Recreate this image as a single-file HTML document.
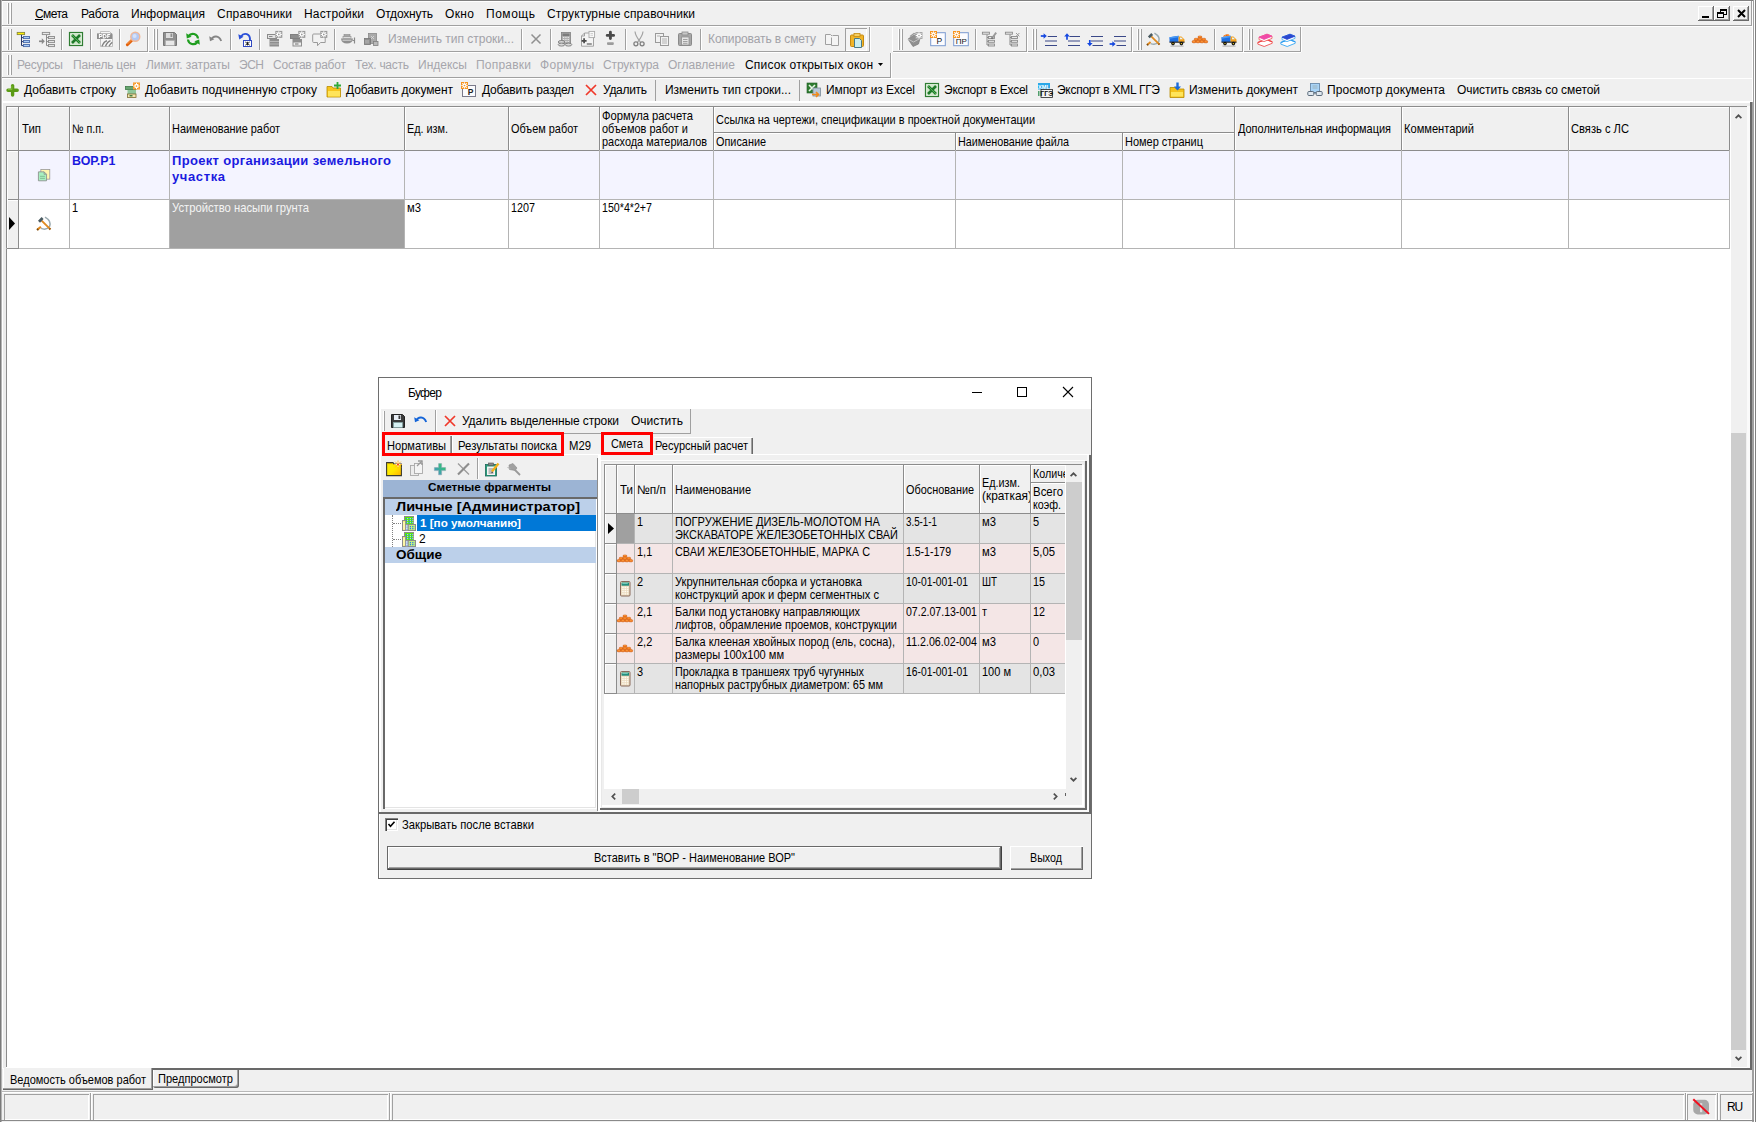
<!DOCTYPE html>
<html lang="ru"><head><meta charset="utf-8"><title>Смета</title>
<style>
html,body{margin:0;padding:0;}
body{width:1756px;height:1122px;position:relative;overflow:hidden;background:#f0f0f0;
font-family:"Liberation Sans",sans-serif;font-size:12.4px;color:#000;}
div,span.t,svg{position:absolute;}
span.t{white-space:pre;}
svg{overflow:visible;}
</style>
</head>
<body>
<div style="left:0px;top:0px;width:1756px;height:1px;background:#808080;"></div>
<div style="left:2px;top:1px;width:1750px;height:1px;background:#fff;"></div>
<div style="left:2px;top:1px;width:1px;height:100px;background:#fff;"></div>
<div style="left:0px;top:0px;width:1px;height:1122px;background:#7a7a7a;"></div>
<div style="left:1px;top:0px;width:1px;height:1122px;background:#b4b4b4;"></div>
<div style="left:1751px;top:1px;width:1px;height:25px;background:#a0a0a0;"></div>
<div style="left:1752px;top:1px;width:1px;height:101px;background:#fff;"></div>
<div style="left:1752px;top:102px;width:1px;height:1020px;background:#a0a0a0;"></div>
<div style="left:1753px;top:0px;width:1px;height:1122px;background:#a0a0a0;"></div>
<div style="left:1754px;top:0px;width:1px;height:1122px;background:#fff;"></div>
<div style="left:1755px;top:0px;width:1px;height:1122px;background:#808080;"></div>
<div style="left:2px;top:25px;width:1750px;height:1px;background:#a0a0a0;"></div>
<div style="left:2px;top:26px;width:1750px;height:1px;background:#fff;"></div>
<div style="left:7px;top:3px;width:1px;height:21px;background:#fff;"></div>
<div style="left:8px;top:3px;width:1px;height:21px;background:#a0a0a0;"></div>
<div style="left:10px;top:3px;width:1px;height:21px;background:#fff;"></div>
<div style="left:11px;top:3px;width:1px;height:21px;background:#a0a0a0;"></div>
<span class="t" style="left:35px;top:6px;line-height:16px;font-size:12px;letter-spacing:-0.559px;">Смета</span>
<span class="t" style="left:81px;top:6px;line-height:16px;font-size:12px;letter-spacing:-0.322px;">Работа</span>
<span class="t" style="left:131px;top:6px;line-height:16px;font-size:12px;letter-spacing:0.057px;">Информация</span>
<span class="t" style="left:217px;top:6px;line-height:16px;font-size:12px;letter-spacing:0.230px;">Справочники</span>
<span class="t" style="left:304px;top:6px;line-height:16px;font-size:12px;letter-spacing:0.145px;">Настройки</span>
<span class="t" style="left:376px;top:6px;line-height:16px;font-size:12px;letter-spacing:-0.170px;">Отдохнуть</span>
<span class="t" style="left:445px;top:6px;line-height:16px;font-size:12px;letter-spacing:0.370px;">Окно</span>
<span class="t" style="left:486px;top:6px;line-height:16px;font-size:12px;letter-spacing:0.528px;">Помощь</span>
<span class="t" style="left:547px;top:6px;line-height:16px;font-size:12px;letter-spacing:0.112px;">Структурные справочники</span>
<div style="left:35px;top:19px;width:8px;height:1px;background:#000;"></div>
<div style="left:1698px;top:6px;width:16px;height:15px;background:#f0f0f0;box-shadow:inset -1px -1px 0 #696969,inset 1px 1px 0 #fff,inset -2px -2px 0 #a0a0a0;"></div>
<div style="left:1714px;top:6px;width:16px;height:15px;background:#f0f0f0;box-shadow:inset -1px -1px 0 #696969,inset 1px 1px 0 #fff,inset -2px -2px 0 #a0a0a0;"></div>
<div style="left:1733px;top:6px;width:16px;height:15px;background:#f0f0f0;box-shadow:inset -1px -1px 0 #696969,inset 1px 1px 0 #fff,inset -2px -2px 0 #a0a0a0;"></div>
<div style="left:1702px;top:16px;width:7px;height:2px;background:#000;"></div>
<div style="left:1720px;top:9px;width:7px;height:6px;background:#f0f0f0;border:1px solid #000;border-top-width:2px;box-sizing:border-box;"></div>
<div style="left:1717px;top:12px;width:7px;height:6px;background:#f0f0f0;border:1px solid #000;border-top-width:2px;box-sizing:border-box;"></div>
<svg style="left:1737px;top:9px" width="9" height="9" viewBox="0 0 9 9"><path d="M1 1l7 7M8 1l-7 7" stroke="#000" stroke-width="2"/></svg>
<div style="left:2px;top:51px;width:868px;height:1px;background:#a0a0a0;"></div>
<div style="left:2px;top:52px;width:868px;height:1px;background:#fff;"></div>
<div style="left:893px;top:51px;width:408px;height:1px;background:#a0a0a0;"></div>
<div style="left:893px;top:52px;width:408px;height:1px;background:#fff;"></div>
<div style="left:7px;top:29px;width:1px;height:21px;background:#fff;"></div>
<div style="left:8px;top:29px;width:1px;height:21px;background:#a0a0a0;"></div>
<div style="left:10px;top:29px;width:1px;height:21px;background:#fff;"></div>
<div style="left:11px;top:29px;width:1px;height:21px;background:#a0a0a0;"></div>
<svg style="left:16px;top:31px" width="16" height="16" viewBox="0 0 16 16"><rect x="1.2" y="1.4" width="7.4" height="2.2" fill="#ffef00" stroke="#8a8a3a" stroke-width="0.9"/><path d="M5.5 4v10.6h2M5.5 6.6h2M5.5 10.6h2" fill="none" stroke="#2a3a6a" stroke-width="1" /><rect x="7.5" y="5.5" width="6" height="2.1" fill="#a8ccf8" stroke="#4a6aaa" stroke-width="0.9"/><rect x="7.5" y="9.5" width="6" height="2.1" fill="#a8ccf8" stroke="#4a6aaa" stroke-width="0.9"/><rect x="7.5" y="13.5" width="6" height="2.1" fill="#a8ccf8" stroke="#4a6aaa" stroke-width="0.9"/></svg>
<svg style="left:39px;top:31px" width="16" height="16" viewBox="0 0 16 16"><rect x="3.3" y="1.4" width="7.4" height="2.2" fill="#e8e8e8" stroke="#8a8a8a" stroke-width="0.9"/><path d="M7.5 4v10.6h2M7.5 6.6h2M7.5 10.6h2" fill="none" stroke="#8a8a8a" stroke-width="1" /><rect x="9.5" y="5.5" width="6" height="2.1" fill="#e4e4e4" stroke="#8a8a8a" stroke-width="0.9"/><rect x="9.5" y="9.5" width="6" height="2.1" fill="#e4e4e4" stroke="#8a8a8a" stroke-width="0.9"/><rect x="9.5" y="13.5" width="6" height="2.1" fill="#e4e4e4" stroke="#8a8a8a" stroke-width="0.9"/><path d="M0 10.3h4" fill="none" stroke="#8a8a8a" stroke-width="1.7" /><path d="M2.8 7.3l3 3-3 3z" fill="#8a8a8a" /></svg>
<div style="left:61px;top:29px;width:1px;height:21px;background:#a0a0a0;"></div>
<div style="left:62px;top:29px;width:1px;height:21px;background:#fff;"></div>
<svg style="left:68px;top:31px" width="16" height="16" viewBox="0 0 16 16"><rect x="1.5" y="1.5" width="13" height="13" fill="#e9f4e6" stroke="#2f7d32" stroke-width="1.2"/><rect x="3" y="3" width="10" height="10" fill="#cfe8c9"/><path d="M4 4l8 8M12 4l-8 8" fill="none" stroke="#1f7a2a" stroke-width="2.6" /><path d="M4 4l8 8" fill="none" stroke="#5fbf5f" stroke-width="0.8" /></svg>
<div style="left:90px;top:29px;width:1px;height:21px;background:#a0a0a0;"></div>
<div style="left:91px;top:29px;width:1px;height:21px;background:#fff;"></div>
<svg style="left:97px;top:31px" width="16" height="16" viewBox="0 0 16 16"><path d="M3.5 .5h9l3 3v12h-12z" fill="#f6f6f6" stroke="#b4b4b4" stroke-width="0.8" /><rect x="0" y="2.4" width="15.2" height="5.6" fill="#8e8e8e"/><path d="M2.4 7.1v-3.7h1.5a1.05 1.05 0 0 1 0 2.1h-1.5M6.3 7v-3.5h1.1a1.75 1.75 0 0 1 0 3.5zM10.7 7.1v-3.6h2.5M10.7 5.3h2" fill="none" stroke="#fff" stroke-width="1.05" /><path d="M5 15.3q2-5 5-5.6M8.5 15.3q2-4.6 5-5.6M12 15.3q1.5-3 3.3-4" fill="none" stroke="#808080" stroke-width="1.4" /></svg>
<div style="left:119px;top:29px;width:1px;height:21px;background:#a0a0a0;"></div>
<div style="left:120px;top:29px;width:1px;height:21px;background:#fff;"></div>
<svg style="left:125px;top:31px" width="16" height="16" viewBox="0 0 16 16"><path d="M2.3 13.8l4.6-4.6" fill="none" stroke="#e2600a" stroke-width="2.9" stroke-linecap="round"/><path d="M2.4 13l4-4" fill="none" stroke="#ffa050" stroke-width="0.9" /><circle cx="10.3" cy="5.8" r="4.5" fill="#b4c8f2" stroke="#f0b898" stroke-width="1.4"/><circle cx="9.6" cy="5" r="2" fill="#d4e2fb"/></svg>
<div style="left:147px;top:27px;width:1px;height:25px;background:#a0a0a0;"></div>
<div style="left:148px;top:27px;width:1px;height:25px;background:#fff;"></div>
<div style="left:153px;top:29px;width:1px;height:21px;background:#fff;"></div>
<div style="left:154px;top:29px;width:1px;height:21px;background:#a0a0a0;"></div>
<div style="left:156px;top:29px;width:1px;height:21px;background:#fff;"></div>
<div style="left:157px;top:29px;width:1px;height:21px;background:#a0a0a0;"></div>
<svg style="left:162px;top:31px" width="16" height="16" viewBox="0 0 16 16"><path d="M1.5 1.5h11l2 2v11h-13z" fill="#8f8f8f" stroke="#777" stroke-width="1" /><rect x="4" y="2" width="7" height="5" fill="#dcdcdc"/><rect x="8.5" y="2.5" width="1.8" height="3.5" fill="#8f8f8f"/><rect x="3.5" y="9.5" width="9" height="5" fill="#e8e8e8" stroke="#aaa" stroke-width="0.6"/></svg>
<svg style="left:185px;top:31px" width="16" height="16" viewBox="0 0 16 16"><path d="M13 7.5A5.2 5.2 0 0 0 3.6 5" fill="none" stroke="#1f9e1f" stroke-width="2.2" /><path d="M1.2 2.2l.6 5.2 4.8-1.6z" fill="#1f9e1f" /><path d="M3 8.5A5.2 5.2 0 0 0 12.4 11" fill="none" stroke="#1f9e1f" stroke-width="2.2" /><path d="M14.8 13.8l-.6-5.2-4.8 1.6z" fill="#1f9e1f" /></svg>
<svg style="left:208px;top:31px" width="16" height="16" viewBox="0 0 16 16"><path d="M3.5 8.5C5 4.5 11 4 13.2 10" fill="none" stroke="#858585" stroke-width="1.8" /><path d="M1.2 5.2l.8 5 4.4-2z" fill="#858585" /></svg>
<div style="left:230px;top:29px;width:1px;height:21px;background:#a0a0a0;"></div>
<div style="left:231px;top:29px;width:1px;height:21px;background:#fff;"></div>
<svg style="left:237px;top:31px" width="16" height="16" viewBox="0 0 16 16"><path d="M4 5.5C7 1 13.5 2.5 13 9.5" fill="none" stroke="#2a4fd8" stroke-width="1.9" /><path d="M1.3 3.2l1 5.2 4.2-2.6z" fill="#2a4fd8" /><rect x="6.5" y="9.5" width="8" height="6" fill="#fff" stroke="#3048c0" stroke-width="1"/><path d="M8.3 11l4.4 3.2M12.7 11l-4.4 3.2M10.5 10.8v3.6" fill="none" stroke="#111" stroke-width="0.9" /></svg>
<div style="left:259px;top:29px;width:1px;height:21px;background:#a0a0a0;"></div>
<div style="left:260px;top:29px;width:1px;height:21px;background:#fff;"></div>
<svg style="left:266px;top:31px" width="16" height="16" viewBox="0 0 16 16"><rect x="1.5" y="3.5" width="9" height="4" fill="#e4e4e4" stroke="#8a8a8a" stroke-width="1"/><path d="M3 5.5h3.5" fill="none" stroke="#8a8a8a" stroke-width="1" /><rect x="3.5" y="8" width="9.5" height="7.5" fill="#8e8e8e"/><path d="M3.5 10.5h9.5M3.5 13h9.5" fill="none" stroke="#c4c4c4" stroke-width="0.8" /><rect x="9.3" y="-0.10000000000000009" width="7" height="7" fill="#9a9a9a"/><circle cx="12.8" cy="3.4" r="1.5" fill="none" stroke="#fff" stroke-width="1.3"/><path d="M12.8 0.2999999999999998v1.3M12.8 5.2v1.3M9.700000000000001 3.4h1.3M14.600000000000001 3.4h1.3M10.5 1.1l.9 .9M14.200000000000001 4.8l.9 .9M15.100000000000001 1.1l-.9 .9M11.4 4.8l-.9 .9" fill="none" stroke="#fff" stroke-width="1" /></svg>
<svg style="left:289px;top:31px" width="16" height="16" viewBox="0 0 16 16"><rect x="1.5" y="3.5" width="9" height="4" fill="#8e8e8e" stroke="#808080" stroke-width="1"/><rect x="3.5" y="8" width="9.5" height="7.5" fill="#8e8e8e"/><rect x="4.5" y="11.5" width="7.5" height="3" fill="#ececec"/><path d="M6 13h3.5" fill="none" stroke="#707070" stroke-width="1" /><rect x="9.3" y="-0.10000000000000009" width="7" height="7" fill="#9a9a9a"/><circle cx="12.8" cy="3.4" r="1.5" fill="none" stroke="#fff" stroke-width="1.3"/><path d="M12.8 0.2999999999999998v1.3M12.8 5.2v1.3M9.700000000000001 3.4h1.3M14.600000000000001 3.4h1.3M10.5 1.1l.9 .9M14.200000000000001 4.8l.9 .9M15.100000000000001 1.1l-.9 .9M11.4 4.8l-.9 .9" fill="none" stroke="#fff" stroke-width="1" /></svg>
<svg style="left:311px;top:31px" width="16" height="16" viewBox="0 0 16 16"><path d="M2.7 3h11.5v8.5h-4.7l-3 3.2v-3.2h-3.8q-1 0-1-1v-6.5q0-1 1-1z" fill="#f2f2f2" stroke="#9a9a9a" stroke-width="1" /><rect x="9.3" y="-0.10000000000000009" width="7" height="7" fill="#9a9a9a"/><circle cx="12.8" cy="3.4" r="1.5" fill="none" stroke="#fff" stroke-width="1.3"/><path d="M12.8 0.2999999999999998v1.3M12.8 5.2v1.3M9.700000000000001 3.4h1.3M14.600000000000001 3.4h1.3M10.5 1.1l.9 .9M14.200000000000001 4.8l.9 .9M15.100000000000001 1.1l-.9 .9M11.4 4.8l-.9 .9" fill="none" stroke="#fff" stroke-width="1" /></svg>
<div style="left:334px;top:29px;width:1px;height:21px;background:#a0a0a0;"></div>
<div style="left:335px;top:29px;width:1px;height:21px;background:#fff;"></div>
<svg style="left:340px;top:31px" width="16" height="16" viewBox="0 0 16 16"><path d="M1 7.5h12q-.5 5-6 5t-6-5z" fill="#8f8f8f" /><rect x="4" y="3.5" width="6" height="2" fill="#a8a8a8" stroke="#8a8a8a" stroke-width="0.6"/><rect x="3" y="5.5" width="8" height="2" fill="#ddd" stroke="#8a8a8a" stroke-width="0.6"/><path d="M2.5 9.2h9" fill="none" stroke="#d8d8d8" stroke-width="1" /><path d="M14.5 6.5v6" fill="none" stroke="#8a8a8a" stroke-width="1.2" /><path d="M12.5 9.5h2" fill="none" stroke="#8a8a8a" stroke-width="1" /></svg>
<svg style="left:363px;top:31px" width="16" height="16" viewBox="0 0 16 16"><rect x="5.5" y="2.5" width="8" height="10" fill="#a9a9a9" stroke="#8a8a8a" stroke-width="0.8"/><rect x="1.5" y="7.5" width="6" height="6" fill="#8f8f8f" stroke="#777" stroke-width="0.8"/><rect x="10.5" y="10.5" width="4.5" height="4" fill="#b9b9b9" stroke="#808080" stroke-width="0.8"/><path d="M8 5l3 3M11 5l-3 3" fill="none" stroke="#ddd" stroke-width="0.8" /><path d="M3 9v3.5M5 9v3.5" fill="none" stroke="#c8c8c8" stroke-width="0.8" /></svg>
<span class="t" style="left:388px;top:31px;line-height:16px;font-size:12px;color:#a2a2a8;letter-spacing:-0.014px;">Изменить тип строки...</span>
<div style="left:521px;top:29px;width:1px;height:21px;background:#a0a0a0;"></div>
<div style="left:522px;top:29px;width:1px;height:21px;background:#fff;"></div>
<svg style="left:528px;top:31px" width="16" height="16" viewBox="0 0 16 16"><path d="M3.5 3.5l9 9M12.5 3.5l-9 9" fill="none" stroke="#909090" stroke-width="1.5" /></svg>
<div style="left:550px;top:29px;width:1px;height:21px;background:#a0a0a0;"></div>
<div style="left:551px;top:29px;width:1px;height:21px;background:#fff;"></div>
<svg style="left:557px;top:31px" width="16" height="16" viewBox="0 0 16 16"><rect x="4.5" y="1.5" width="9" height="11" fill="#b0b0b0" stroke="#808080" stroke-width="0.8"/><rect x="5.5" y="2.5" width="7" height="2.5" fill="#7c7c7c"/><path d="M6 6.5h6M6 8.5h6M6 10.5h6" fill="none" stroke="#e8e8e8" stroke-width="1" stroke-dasharray="1.3 1"/><ellipse cx="4.5" cy="11" rx="3.3" ry="1.5" fill="#d8d8d8" stroke="#707070" stroke-width=".8"/><ellipse cx="4.5" cy="13.6" rx="3.3" ry="1.5" fill="#d8d8d8" stroke="#707070" stroke-width=".8"/><ellipse cx="11.5" cy="13.6" rx="3.3" ry="1.5" fill="#d8d8d8" stroke="#707070" stroke-width=".8"/></svg>
<svg style="left:580px;top:31px" width="16" height="16" viewBox="0 0 16 16"><path d="M4.5 2h9v13.2h-12v-10.2z" fill="#f4f4f4" stroke="#9a9a9a" stroke-width="0.9" /><path d="M1.5 5h3v-3" fill="none" stroke="#9a9a9a" stroke-width="0.9" /><rect x="9" y="0.4" width="5.6" height="6.2" fill="#f8f8f8" stroke="#a8a8a8" stroke-width="0.9"/><path d="M1.6 9.8h5M4.1 7.3v5" fill="none" stroke="#4a4a4a" stroke-width="1.7" /><path d="M6.8 13h5" fill="none" stroke="#8a8a8a" stroke-width="1.7" /><path d="M10.5 2.5h2.5M10.5 4.3h2.5" fill="none" stroke="#c4c4c4" stroke-width="0.8" /></svg>
<svg style="left:602px;top:31px" width="16" height="16" viewBox="0 0 16 16"><path d="M5.2 4.4h6.4M8.4 1.2v6.4" fill="none" stroke="#4a4a4a" stroke-width="2.9" stroke-linecap="round"/><rect x="5" y="11.2" width="6.8" height="2.7" fill="#9c9c9c" rx="0.8"/></svg>
<div style="left:625px;top:29px;width:1px;height:21px;background:#a0a0a0;"></div>
<div style="left:626px;top:29px;width:1px;height:21px;background:#fff;"></div>
<svg style="left:631px;top:31px" width="16" height="16" viewBox="0 0 16 16"><path d="M4 .5C4.5 5 7 8 9.3 11M12 .5C11.5 5 9 8 6.7 11" fill="none" stroke="#a2a2a2" stroke-width="1.2" /><circle cx="4.9" cy="12.8" r="2" fill="none" stroke="#808080" stroke-width="1.3"/><circle cx="11.1" cy="12.8" r="2" fill="none" stroke="#808080" stroke-width="1.3"/></svg>
<svg style="left:654px;top:31px" width="16" height="16" viewBox="0 0 16 16"><rect x="1.5" y="2.5" width="8" height="9" fill="#f2f2f2" stroke="#9a9a9a" stroke-width="1"/><rect x="6.5" y="5.5" width="8" height="9" fill="#f2f2f2" stroke="#9a9a9a" stroke-width="1"/><path d="M8 8h5M8 10h5M8 12h5M3 5h3" fill="none" stroke="#aaa" stroke-width="0.9" /></svg>
<svg style="left:677px;top:31px" width="16" height="16" viewBox="0 0 16 16"><rect x="1.5" y="2.5" width="13" height="12" fill="#a8a8a8" stroke="#8a8a8a" stroke-width="1" rx="1"/><rect x="5" y="1" width="6" height="3" fill="#c8c8c8" stroke="#8a8a8a" stroke-width="0.8"/><rect x="4.5" y="6" width="7.5" height="8" fill="#e6e6e6" stroke="#909090" stroke-width="0.8"/><path d="M6 8.5h4.5M6 10.5h4.5M6 12.3h4.5" fill="none" stroke="#999" stroke-width="0.9" /></svg>
<div style="left:700px;top:29px;width:1px;height:21px;background:#a0a0a0;"></div>
<div style="left:701px;top:29px;width:1px;height:21px;background:#fff;"></div>
<span class="t" style="left:708px;top:31px;line-height:16px;font-size:12px;color:#a2a2a8;letter-spacing:-0.107px;">Копировать в смету</span>
<svg style="left:824px;top:31px" width="16" height="16" viewBox="0 0 16 16"><path d="M1.5 3.5h5l2 2v8h-7z" fill="#f4f4f4" stroke="#a0a0a0" stroke-width="1" /><path d="M8.5 4.5h6v10h-7v-8" fill="#f4f4f4" stroke="#a0a0a0" stroke-width="1" /></svg>
<div style="left:845px;top:28px;width:22px;height:23px;background:#f4f4f4;box-shadow:inset 1px 1px 0 #a0a0a0,inset -1px -1px 0 #fff;"></div>
<svg style="left:849px;top:32px" width="16" height="16" viewBox="0 0 16 16"><rect x="1.5" y="3" width="13" height="11.5" fill="#f0b428" stroke="#c58a10" stroke-width="1" rx="1"/><rect x="5" y="1.5" width="6" height="3" fill="#f6cf60" stroke="#c58a10" stroke-width="0.8"/><path d="M5.5 6.5h5l2 2v7h-7z" fill="#c9eef0" stroke="#4a7a88" stroke-width="1" /></svg>
<div style="left:869px;top:27px;width:1px;height:25px;background:#a0a0a0;"></div>
<div style="left:870px;top:27px;width:1px;height:25px;background:#fff;"></div>
<div style="left:892px;top:27px;width:1px;height:25px;background:#fff;"></div>
<div style="left:898px;top:29px;width:1px;height:21px;background:#fff;"></div>
<div style="left:899px;top:29px;width:1px;height:21px;background:#a0a0a0;"></div>
<div style="left:901px;top:29px;width:1px;height:21px;background:#fff;"></div>
<div style="left:902px;top:29px;width:1px;height:21px;background:#a0a0a0;"></div>
<svg style="left:907px;top:31px" width="16" height="16" viewBox="0 0 16 16"><path d="M1 8l6-4 6 3.5-1.5 5.5-5.5 2.5z" fill="#909090" stroke="#7a7a7a" stroke-width="0.7" /><path d="M1 8l5.5 3 6.5-3.5" fill="none" stroke="#c4c4c4" stroke-width="1" /><path d="M3 5.5l4-3 3 1.5" fill="none" stroke="#9a9a9a" stroke-width="1.2" /><rect x="8.5" y="1.0" width="7" height="7" fill="#a8a8a8"/><circle cx="12" cy="4.5" r="1.5" fill="none" stroke="#fff" stroke-width="1.3"/><path d="M12 1.4v1.3M12 6.3v1.3M8.9 4.5h1.3M13.8 4.5h1.3M9.7 2.2l.9 .9M13.4 5.9l.9 .9M14.3 2.2l-.9 .9M10.6 5.9l-.9 .9" fill="none" stroke="#fff" stroke-width="1" /></svg>
<svg style="left:930px;top:31px" width="16" height="16" viewBox="0 0 16 16"><rect x="0.7" y="1.7" width="14.6" height="13" fill="#fcfcff" stroke="#7a9ad0" stroke-width="1"/><text x="9.3" y="13.2" font-family="Liberation Sans" font-size="8.5" fill="#111" text-anchor="middle">Р</text><rect x="0.0" y="0.0" width="7" height="7" fill="#f7941d"/><circle cx="3.5" cy="3.5" r="1.5" fill="none" stroke="#fff" stroke-width="1.3"/><path d="M3.5 0.3999999999999999v1.3M3.5 5.3v1.3M0.3999999999999999 3.5h1.3M5.3 3.5h1.3M1.2000000000000002 1.2000000000000002l.9 .9M4.9 4.9l.9 .9M5.8 1.2000000000000002l-.9 .9M2.1 4.9l-.9 .9" fill="none" stroke="#fff" stroke-width="1" /></svg>
<svg style="left:953px;top:31px" width="16" height="16" viewBox="0 0 16 16"><rect x="0.7" y="1.7" width="14.6" height="13" fill="#fcfcff" stroke="#7a9ad0" stroke-width="1"/><text x="8.2" y="13.2" font-family="Liberation Sans" font-size="8" fill="#111" text-anchor="middle">ПР</text><rect x="0.0" y="0.0" width="7" height="7" fill="#f7941d"/><circle cx="3.5" cy="3.5" r="1.5" fill="none" stroke="#fff" stroke-width="1.3"/><path d="M3.5 0.3999999999999999v1.3M3.5 5.3v1.3M0.3999999999999999 3.5h1.3M5.3 3.5h1.3M1.2000000000000002 1.2000000000000002l.9 .9M4.9 4.9l.9 .9M5.8 1.2000000000000002l-.9 .9M2.1 4.9l-.9 .9" fill="none" stroke="#fff" stroke-width="1" /></svg>
<div style="left:975px;top:29px;width:1px;height:21px;background:#a0a0a0;"></div>
<div style="left:976px;top:29px;width:1px;height:21px;background:#fff;"></div>
<svg style="left:981px;top:31px" width="16" height="16" viewBox="0 0 16 16"><rect x="1.4" y="1.2" width="7" height="2" fill="#e8e8e8" stroke="#8a8a8a" stroke-width="0.9"/><path d="M6 3.5v10.5h1.5M6 6.5h1.5M6 10.3h1.5" fill="none" stroke="#8a8a8a" stroke-width="1" /><rect x="7.5" y="5.5" width="6" height="2" fill="#e8e8e8" stroke="#8a8a8a" stroke-width="0.9"/><rect x="7.5" y="9.3" width="6" height="2" fill="#e8e8e8" stroke="#8a8a8a" stroke-width="0.9"/><rect x="7.5" y="13" width="6" height="2" fill="#e8e8e8" stroke="#8a8a8a" stroke-width="0.9"/><path d="M11 7.2L15.2 1.6" fill="none" stroke="#9a9a9a" stroke-width="1.9" /><path d="M10.6 7.8l.8-1.2" fill="none" stroke="#6a6a6a" stroke-width="1.6" /></svg>
<svg style="left:1004px;top:31px" width="16" height="16" viewBox="0 0 16 16"><rect x="1.4" y="1.2" width="7" height="2" fill="#e8e8e8" stroke="#8a8a8a" stroke-width="0.9"/><path d="M6 3.5v10.5h1.5M6 6.5h1.5M6 10.3h1.5" fill="none" stroke="#8a8a8a" stroke-width="1" /><rect x="7.5" y="5.5" width="6" height="2" fill="#e8e8e8" stroke="#8a8a8a" stroke-width="0.9"/><rect x="7.5" y="9.3" width="6" height="2" fill="#e8e8e8" stroke="#8a8a8a" stroke-width="0.9"/><rect x="7.5" y="13" width="6" height="2" fill="#e8e8e8" stroke="#8a8a8a" stroke-width="0.9"/><path d="M12 2l3.4 3.4M15.4 2l-3.4 3.4" fill="none" stroke="#9a9a9a" stroke-width="1" /></svg>
<div style="left:1026px;top:27px;width:1px;height:25px;background:#a0a0a0;"></div>
<div style="left:1027px;top:27px;width:1px;height:25px;background:#fff;"></div>
<div style="left:1032px;top:29px;width:1px;height:21px;background:#fff;"></div>
<div style="left:1033px;top:29px;width:1px;height:21px;background:#a0a0a0;"></div>
<div style="left:1035px;top:29px;width:1px;height:21px;background:#fff;"></div>
<div style="left:1036px;top:29px;width:1px;height:21px;background:#a0a0a0;"></div>
<svg style="left:1040px;top:31px" width="16" height="16" viewBox="0 0 16 16"><path d="M7.8 5.5h9.2M5 10h12M5 14.5h12" fill="none" stroke="#3a4888" stroke-width="1.2" /><path d="M.8 5h4" fill="none" stroke="#1447e0" stroke-width="1.7" /><path d="M3.6 2.2l3.2 2.8-3.2 2.8z" fill="#1447e0" /></svg>
<svg style="left:1063px;top:31px" width="16" height="16" viewBox="0 0 16 16"><path d="M6.5 5.5h10.5M5 10h12M5 14.5h12" fill="none" stroke="#3a4888" stroke-width="1.2" /><path d="M4 4.5v4.2" fill="none" stroke="#1447e0" stroke-width="1.7" /><path d="M1.2 5.4l2.8-3.2 2.8 3.2z" fill="#1447e0" /></svg>
<svg style="left:1086px;top:31px" width="16" height="16" viewBox="0 0 16 16"><path d="M5 5.5h12M5 10h12M6.5 14.5h10.5" fill="none" stroke="#3a4888" stroke-width="1.2" /><path d="M3.8 9v4" fill="none" stroke="#1447e0" stroke-width="1.7" /><path d="M1 12l2.8 3.2 2.8-3.2z" fill="#1447e0" /></svg>
<svg style="left:1109px;top:31px" width="16" height="16" viewBox="0 0 16 16"><path d="M5 5.5h12M5 10h12M7.5 14.5h9.5" fill="none" stroke="#3a4888" stroke-width="1.2" /><path d="M.6 13h4" fill="none" stroke="#1447e0" stroke-width="1.7" /><path d="M3.4 10.2l3.2 2.8-3.2 2.8z" fill="#1447e0" /></svg>
<div style="left:1131px;top:27px;width:1px;height:25px;background:#a0a0a0;"></div>
<div style="left:1132px;top:27px;width:1px;height:25px;background:#fff;"></div>
<div style="left:1137px;top:29px;width:1px;height:21px;background:#fff;"></div>
<div style="left:1138px;top:29px;width:1px;height:21px;background:#a0a0a0;"></div>
<div style="left:1140px;top:29px;width:1px;height:21px;background:#fff;"></div>
<div style="left:1141px;top:29px;width:1px;height:21px;background:#a0a0a0;"></div>
<svg style="left:1146px;top:32px" width="15" height="15" viewBox="0 0 16 16"><path d="M9 1.2Q15.6 5 13.6 10.4Q10.5 14.6 5 12.4" fill="none" stroke="#9aaab0" stroke-width="1.5" /><path d="M1.4 13.6L4.9 10.7" fill="none" stroke="#e08a20" stroke-width="2.1" /><path d="M1 14l1.2-1" fill="none" stroke="#7a4a10" stroke-width="2" /><path d="M5.6 4.6L14.2 13.2" fill="none" stroke="#e08a20" stroke-width="1.9" /><path d="M13.3 12.3l1.2 1.2" fill="none" stroke="#9a5a10" stroke-width="1.9" /><path d="M3 5.7L6.6 2.1" fill="none" stroke="#4a5a60" stroke-width="2.8" /></svg>
<svg style="left:1169px;top:31px" width="16" height="16" viewBox="0 0 16 16"><path d="M.5 6.3L9.6 4.8V11H.5z" fill="#1e6ee0" /><path d="M.5 6.3L9.6 4.8v1.4L.5 7.7z" fill="#4a9af4" /><path d="M9.6 5.6h2.8l3.1 3v2.6h-5.9z" fill="#f2a01e" /><path d="M11 6.6h1.3l1.7 1.7h-3z" fill="#e4f2ff" /><rect x="0.5" y="10.6" width="15" height="1.2" fill="#2a2a2a"/><circle cx="4" cy="12.6" r="1.8" fill="#111"/><circle cx="4" cy="12.6" r="0.7" fill="#f4d020"/><circle cx="12.4" cy="12.6" r="1.8" fill="#111"/><circle cx="12.4" cy="12.6" r="0.7" fill="#f4d020"/><path d="M1.5 15.1h13" fill="none" stroke="#9a9a9a" stroke-width="0.8" /></svg>
<svg style="left:1192px;top:31px" width="16" height="16" viewBox="0 0 16 16"><rect x="6.1" y="5" width="3.7" height="2.2" fill="#f67a14" stroke="#c94e00" stroke-width="0.5" rx="0.9"/><path d="M6.8999999999999995 5.7h2" fill="none" stroke="#ffb060" stroke-width="0.6" /><rect x="2.3" y="7.3" width="3.7" height="2.2" fill="#f67a14" stroke="#c94e00" stroke-width="0.5" rx="0.9"/><path d="M3.0999999999999996 8.0h2" fill="none" stroke="#ffb060" stroke-width="0.6" /><rect x="6.1" y="7.3" width="3.7" height="2.2" fill="#f67a14" stroke="#c94e00" stroke-width="0.5" rx="0.9"/><path d="M6.8999999999999995 8.0h2" fill="none" stroke="#ffb060" stroke-width="0.6" /><rect x="9.9" y="7.3" width="3.7" height="2.2" fill="#f67a14" stroke="#c94e00" stroke-width="0.5" rx="0.9"/><path d="M10.700000000000001 8.0h2" fill="none" stroke="#ffb060" stroke-width="0.6" /><rect x="0.2" y="9.6" width="3.7" height="2.2" fill="#f67a14" stroke="#c94e00" stroke-width="0.5" rx="0.9"/><path d="M1.0 10.299999999999999h2" fill="none" stroke="#ffb060" stroke-width="0.6" /><rect x="4.1" y="9.6" width="3.7" height="2.2" fill="#f67a14" stroke="#c94e00" stroke-width="0.5" rx="0.9"/><path d="M4.8999999999999995 10.299999999999999h2" fill="none" stroke="#ffb060" stroke-width="0.6" /><rect x="8" y="9.6" width="3.7" height="2.2" fill="#f67a14" stroke="#c94e00" stroke-width="0.5" rx="0.9"/><path d="M8.8 10.299999999999999h2" fill="none" stroke="#ffb060" stroke-width="0.6" /><rect x="11.9" y="9.6" width="3.7" height="2.2" fill="#f67a14" stroke="#c94e00" stroke-width="0.5" rx="0.9"/><path d="M12.700000000000001 10.299999999999999h2" fill="none" stroke="#ffb060" stroke-width="0.6" /></svg>
<div style="left:1214px;top:29px;width:1px;height:21px;background:#a0a0a0;"></div>
<div style="left:1215px;top:29px;width:1px;height:21px;background:#fff;"></div>
<svg style="left:1221px;top:31px" width="16" height="16" viewBox="0 0 16 16"><path d="M2 5.8q.5-2.2 3-2.4q2.6-.4 4 1.2z" fill="#e8640a" /><path d="M3.4 4.6h1.6M6 4h1.6" fill="none" stroke="#ffa040" stroke-width="0.9" /><path d="M.5 6.3L9.6 4.8V11H.5z" fill="#1e6ee0" /><path d="M.5 6.3L9.6 4.8v1.4L.5 7.7z" fill="#4a9af4" /><path d="M9.6 5.6h2.8l3.1 3v2.6h-5.9z" fill="#f2a01e" /><path d="M11 6.6h1.3l1.7 1.7h-3z" fill="#e4f2ff" /><rect x="0.5" y="10.6" width="15" height="1.2" fill="#2a2a2a"/><circle cx="4" cy="12.6" r="1.8" fill="#111"/><circle cx="4" cy="12.6" r="0.7" fill="#f4d020"/><circle cx="12.4" cy="12.6" r="1.8" fill="#111"/><circle cx="12.4" cy="12.6" r="0.7" fill="#f4d020"/><path d="M1.5 15.1h13" fill="none" stroke="#9a9a9a" stroke-width="0.8" /></svg>
<div style="left:1242px;top:27px;width:1px;height:25px;background:#a0a0a0;"></div>
<div style="left:1243px;top:27px;width:1px;height:25px;background:#fff;"></div>
<div style="left:1248px;top:29px;width:1px;height:21px;background:#fff;"></div>
<div style="left:1249px;top:29px;width:1px;height:21px;background:#a0a0a0;"></div>
<div style="left:1251px;top:29px;width:1px;height:21px;background:#fff;"></div>
<div style="left:1252px;top:29px;width:1px;height:21px;background:#a0a0a0;"></div>
<svg style="left:1257px;top:31px" width="16" height="16" viewBox="0 0 16 16"><path d="M.8 11.5l8-3 6.4 2.2v1.6l-8 3.2-6.4-2.4z" fill="#fff" stroke="#f06060" stroke-width="1" /><path d="M.8 11.5l8-3 6.4 2.2" fill="none" stroke="#f04040" stroke-width="1.2" /><path d="M2 6.2l8-3 5 2v2.2l-8 3.2-5-2z" fill="#fff" stroke="#f06060" stroke-width="0.9" /><path d="M2 6.2l8-3 5 2-8 3.2z" fill="#f04aa8" stroke="#f04aa8" stroke-width="0.8" /></svg>
<svg style="left:1280px;top:31px" width="16" height="16" viewBox="0 0 16 16"><path d="M.8 11.5l8-3 6.4 2.2v1.6l-8 3.2-6.4-2.4z" fill="#fff" stroke="#4ab0f4" stroke-width="1" /><path d="M.8 11.5l8-3 6.4 2.2" fill="none" stroke="#2a9af0" stroke-width="1.2" /><path d="M2 6.2l8-3 5 2v2.2l-8 3.2-5-2z" fill="#fff" stroke="#4ab0f4" stroke-width="0.9" /><path d="M2 6.2l8-3 5 2-8 3.2z" fill="#2a48d0" stroke="#2a48d0" stroke-width="0.8" /></svg>
<div style="left:1300px;top:27px;width:1px;height:25px;background:#a0a0a0;"></div>
<div style="left:1301px;top:27px;width:1px;height:25px;background:#fff;"></div>
<div style="left:2px;top:77px;width:890px;height:1px;background:#a0a0a0;"></div>
<div style="left:2px;top:78px;width:1751px;height:1px;background:#fff;"></div>
<div style="left:7px;top:55px;width:1px;height:20px;background:#fff;"></div>
<div style="left:8px;top:55px;width:1px;height:20px;background:#a0a0a0;"></div>
<div style="left:10px;top:55px;width:1px;height:20px;background:#fff;"></div>
<div style="left:11px;top:55px;width:1px;height:20px;background:#a0a0a0;"></div>
<span class="t" style="left:17px;top:57px;line-height:16px;font-size:12px;color:#a6a6ac;letter-spacing:-0.221px;">Ресурсы</span>
<span class="t" style="left:73px;top:57px;line-height:16px;font-size:12px;color:#a6a6ac;letter-spacing:-0.203px;">Панель цен</span>
<span class="t" style="left:146px;top:57px;line-height:16px;font-size:12px;color:#a6a6ac;letter-spacing:-0.076px;">Лимит. затраты</span>
<span class="t" style="left:239px;top:57px;line-height:16px;font-size:12px;color:#a6a6ac;letter-spacing:-0.484px;">ЭСН</span>
<span class="t" style="left:273px;top:57px;line-height:16px;font-size:12px;color:#a6a6ac;letter-spacing:-0.202px;">Состав работ</span>
<span class="t" style="left:355px;top:57px;line-height:16px;font-size:12px;color:#a6a6ac;letter-spacing:-0.269px;">Тех. часть</span>
<span class="t" style="left:418px;top:57px;line-height:16px;font-size:12px;color:#a6a6ac;letter-spacing:0.010px;">Индексы</span>
<span class="t" style="left:476px;top:57px;line-height:16px;font-size:12px;color:#a6a6ac;letter-spacing:0.217px;">Поправки</span>
<span class="t" style="left:540px;top:57px;line-height:16px;font-size:12px;color:#a6a6ac;letter-spacing:0.297px;">Формулы</span>
<span class="t" style="left:603px;top:57px;line-height:16px;font-size:12px;color:#a6a6ac;letter-spacing:-0.117px;">Структура</span>
<span class="t" style="left:668px;top:57px;line-height:16px;font-size:12px;color:#a6a6ac;letter-spacing:0.010px;">Оглавление</span>
<span class="t" style="left:745px;top:57px;line-height:16px;font-size:12px;letter-spacing:0.183px;">Список открытых окон</span>
<svg style="left:878px;top:63px" width="5" height="3" viewBox="0 0 5 3"><path d="M0 0h5l-2.5 3z" fill="#000"/></svg>
<div style="left:890px;top:53px;width:1px;height:25px;background:#a0a0a0;"></div>
<div style="left:891px;top:53px;width:1px;height:25px;background:#fff;"></div>
<svg style="left:5px;top:82px" width="16" height="16" viewBox="0 0 16 16"><path d="M3 8.3h9.2M7.6 3.6v9.4" fill="none" stroke="#5a9a14" stroke-width="3.4" stroke-linecap="round"/><path d="M3 7.6h3.9v-3.9" fill="none" stroke="#86c43c" stroke-width="0.9" /></svg>
<span class="t" style="left:24px;top:82px;line-height:16px;font-size:12px;letter-spacing:-0.044px;">Добавить строку</span>
<svg style="left:125px;top:82px" width="16" height="16" viewBox="0 0 16 16"><rect x="0.5" y="4.5" width="10.5" height="3" fill="#66a56f" stroke="#3f7a49" stroke-width="0.8"/><rect x="2.5" y="8" width="8.5" height="4" fill="#8fc79a"/><rect x="2.5" y="12" width="8.5" height="3.5" fill="#f3e7b0" stroke="#7a6a30" stroke-width="0.8"/><path d="M4.5 13.8h3" fill="none" stroke="#1d6a2a" stroke-width="1.2" /><rect x="8.0" y="0.5" width="7" height="7" fill="#f7941d"/><circle cx="11.5" cy="4" r="1.5" fill="none" stroke="#fff" stroke-width="1.3"/><path d="M11.5 0.8999999999999999v1.3M11.5 5.8v1.3M8.4 4h1.3M13.3 4h1.3M9.2 1.7000000000000002l.9 .9M12.9 5.4l.9 .9M13.8 1.7000000000000002l-.9 .9M10.1 5.4l-.9 .9" fill="none" stroke="#fff" stroke-width="1" /></svg>
<span class="t" style="left:145px;top:82px;line-height:16px;font-size:12px;letter-spacing:0.063px;">Добавить подчиненную строку</span>
<svg style="left:326px;top:82px" width="16" height="16" viewBox="0 0 16 16"><path d="M1 4.5h5l1 1.5h7.5v9h-13.5z" fill="#f7c51d" stroke="#b88a00" stroke-width="0.8" /><path d="M2 9h12v5.5h-12z" fill="#ffe45a" /><path d="M11.5 0v7M8 3.5h7" fill="none" stroke="#2faa3a" stroke-width="1.8" /></svg>
<span class="t" style="left:346px;top:82px;line-height:16px;font-size:12px;letter-spacing:-0.084px;">Добавить документ</span>
<svg style="left:461px;top:82px" width="16" height="16" viewBox="0 0 16 16"><rect x="1.5" y="3.5" width="13" height="11" fill="#fbfbfd" stroke="#7a7a8a" stroke-width="1"/><text x="9.5" y="13.3" font-family="Liberation Sans" font-size="8.5" font-weight="700" fill="#222" text-anchor="middle">Р</text><rect x="0.0" y="0.0" width="7" height="7" fill="#f7941d"/><circle cx="3.5" cy="3.5" r="1.5" fill="none" stroke="#fff" stroke-width="1.3"/><path d="M3.5 0.3999999999999999v1.3M3.5 5.3v1.3M0.3999999999999999 3.5h1.3M5.3 3.5h1.3M1.2000000000000002 1.2000000000000002l.9 .9M4.9 4.9l.9 .9M5.8 1.2000000000000002l-.9 .9M2.1 4.9l-.9 .9" fill="none" stroke="#fff" stroke-width="1" /></svg>
<span class="t" style="left:482px;top:82px;line-height:16px;font-size:12px;letter-spacing:-0.222px;">Добавить раздел</span>
<svg style="left:583px;top:82px" width="16" height="16" viewBox="0 0 16 16"><path d="M3 3l10 10M13 3l-10 10" fill="none" stroke="#f0382a" stroke-width="1.7" /></svg>
<span class="t" style="left:603px;top:82px;line-height:16px;font-size:12px;letter-spacing:-0.305px;">Удалить</span>
<div style="left:655px;top:80px;width:1px;height:21px;background:#a0a0a0;"></div>
<span class="t" style="left:665px;top:82px;line-height:16px;font-size:12px;letter-spacing:-0.014px;">Изменить тип строки...</span>
<div style="left:799px;top:80px;width:1px;height:21px;background:#a0a0a0;"></div>
<svg style="left:806px;top:82px" width="16" height="16" viewBox="0 0 16 16"><rect x="1" y="1" width="10" height="10" fill="#2f7d32" stroke="#1f5d22" stroke-width="0.6"/><path d="M3 3l6 6M9 3l-6 6" fill="none" stroke="#eaf6e8" stroke-width="1.6" /><rect x="7" y="6" width="7.5" height="8" fill="#b8c8d8" stroke="#7a8a9a" stroke-width="0.8"/><path d="M6 12.5h6M10 10l2.5 2.5-2.5 2.5" fill="none" stroke="#f28a1a" stroke-width="1.6" /></svg>
<span class="t" style="left:826px;top:82px;line-height:16px;font-size:12px;letter-spacing:-0.084px;">Импорт из Excel</span>
<svg style="left:924px;top:82px" width="16" height="16" viewBox="0 0 16 16"><rect x="1.5" y="1.5" width="13" height="13" fill="#e9f4e6" stroke="#2f7d32" stroke-width="1.2"/><rect x="3" y="3" width="10" height="10" fill="#cfe8c9"/><path d="M4 4l8 8M12 4l-8 8" fill="none" stroke="#1f7a2a" stroke-width="2.6" /><path d="M4 4l8 8" fill="none" stroke="#5fbf5f" stroke-width="0.8" /></svg>
<span class="t" style="left:944px;top:82px;line-height:16px;font-size:12px;letter-spacing:-0.249px;">Экспорт в Excel</span>
<svg style="left:1037px;top:82px" width="16" height="16" viewBox="0 0 16 16"><rect x="1" y="1" width="12" height="6.5" fill="#2aa8e8"/><text x="7" y="6.5" font-family="Liberation Sans" font-size="5.6" font-weight="700" fill="#fff" text-anchor="middle">XML</text><rect x="4" y="7.5" width="11.5" height="8" fill="#f4f4f4" stroke="#222" stroke-width="0.8"/><text x="9.8" y="14.3" font-family="Liberation Sans" font-size="7" font-weight="700" fill="#111" text-anchor="middle">ГГЭ</text><path d="M1.5 9v5M3 9v5" fill="none" stroke="#2a8a4a" stroke-width="0.8" /></svg>
<span class="t" style="left:1057px;top:82px;line-height:16px;font-size:12px;letter-spacing:-0.271px;">Экспорт в XML ГГЭ</span>
<svg style="left:1169px;top:82px" width="16" height="16" viewBox="0 0 16 16"><path d="M1 5.5h5l1 1.5h8v8.5h-14z" fill="#f5c21a" stroke="#b88a00" stroke-width="0.8" /><path d="M2 10h12v4.5h-12z" fill="#ffe45a" /><path d="M8.5 .5v5" fill="none" stroke="#1a6ad8" stroke-width="2.4" /><path d="M5 4.5h7l-3.5 4z" fill="#1a6ad8" /></svg>
<span class="t" style="left:1189px;top:82px;line-height:16px;font-size:12px;letter-spacing:-0.027px;">Изменить документ</span>
<svg style="left:1307px;top:82px" width="16" height="16" viewBox="0 0 16 16"><rect x="3.5" y="1.5" width="9" height="9" fill="#a8d4f8" stroke="#6a8aaa" stroke-width="0.9"/><path d="M5.5 4h5M5.5 6h5" fill="none" stroke="#9aa" stroke-width="0.8" /><rect x="0.8" y="9.5" width="6" height="4" fill="#dfe8f0" stroke="#5a6a7a" stroke-width="1" rx="1"/><rect x="9.2" y="9.5" width="6" height="4" fill="#dfe8f0" stroke="#5a6a7a" stroke-width="1" rx="1"/><path d="M6.8 11h2.4" fill="none" stroke="#5a6a7a" stroke-width="1" /></svg>
<span class="t" style="left:1327px;top:82px;line-height:16px;font-size:12px;letter-spacing:0.079px;">Просмотр документа</span>
<span class="t" style="left:1457px;top:82px;line-height:16px;font-size:12px;letter-spacing:-0.079px;">Очистить связь со сметой</span>
<div style="left:2px;top:101px;width:1750px;height:2px;background:#fff;"></div>
<div style="left:2px;top:101px;width:1px;height:968px;background:#fff;"></div>
<div style="left:3px;top:103px;width:1747px;height:965px;background:#ececec;"></div>
<div style="left:6px;top:106px;width:1741px;height:962px;background:#fff;"></div>
<div style="left:6px;top:106px;width:1px;height:961px;background:#8c8c8c;"></div>
<div style="left:1750px;top:102px;width:2px;height:968px;background:#696969;"></div>
<div style="left:153px;top:1068px;width:1599px;height:2px;background:#696969;"></div>
<div style="left:1747px;top:106px;width:3px;height:962px;background:#fafafa;"></div>
<div style="left:1731px;top:107px;width:16px;height:960px;background:#f0f0f0;"></div>
<div style="left:1730px;top:106px;width:17px;height:1px;background:#8c8c8c;"></div>
<div style="left:1731px;top:433px;width:15px;height:617px;background:#cdcdcd;"></div>
<svg style="left:1735px;top:114px" width="7" height="5" viewBox="0 0 7 5"><path d="M.6 4.2L3.5 1.3l2.9 2.9" fill="none" stroke="#505050" stroke-width="1.7"/></svg>
<svg style="left:1735px;top:1056px" width="7" height="5" viewBox="0 0 7 5"><path d="M.6 .8L3.5 3.7 6.4 .8" fill="none" stroke="#505050" stroke-width="1.7"/></svg>
<div style="left:6px;top:106px;width:1724px;height:44px;background:#f0f0f0;"></div>
<div style="left:6px;top:106px;width:1724px;height:1px;background:#8c8c8c;"></div>
<div style="left:6px;top:150px;width:1724px;height:1px;background:#8c8c8c;"></div>
<div style="left:19px;top:151px;width:1711px;height:48px;background:#f4f4ff;"></div>
<div style="left:6px;top:151px;width:13px;height:97px;background:#f0f0f0;"></div>
<div style="left:170px;top:200px;width:235px;height:48px;background:#a0a0a0;"></div>
<div style="left:6px;top:199px;width:1724px;height:1px;background:#b4b4b4;"></div>
<div style="left:6px;top:248px;width:1724px;height:1px;background:#b4b4b4;"></div>
<div style="left:7px;top:107px;width:1722px;height:1px;background:#fff;"></div>
<div style="left:714px;top:133px;width:520px;height:1px;background:#fff;"></div>
<div style="left:6px;top:106px;width:1px;height:44px;background:#8c8c8c;"></div>
<div style="left:7px;top:107px;width:1px;height:43px;background:#fff;"></div>
<div style="left:6px;top:150px;width:1px;height:98px;background:#8c8c8c;"></div>
<div style="left:18px;top:106px;width:1px;height:44px;background:#8c8c8c;"></div>
<div style="left:19px;top:107px;width:1px;height:43px;background:#fff;"></div>
<div style="left:18px;top:150px;width:1px;height:98px;background:#8c8c8c;"></div>
<div style="left:69px;top:106px;width:1px;height:44px;background:#8c8c8c;"></div>
<div style="left:70px;top:107px;width:1px;height:43px;background:#fff;"></div>
<div style="left:69px;top:150px;width:1px;height:98px;background:#b4b4b4;"></div>
<div style="left:169px;top:106px;width:1px;height:44px;background:#8c8c8c;"></div>
<div style="left:170px;top:107px;width:1px;height:43px;background:#fff;"></div>
<div style="left:169px;top:150px;width:1px;height:98px;background:#b4b4b4;"></div>
<div style="left:404px;top:106px;width:1px;height:44px;background:#8c8c8c;"></div>
<div style="left:405px;top:107px;width:1px;height:43px;background:#fff;"></div>
<div style="left:404px;top:150px;width:1px;height:98px;background:#b4b4b4;"></div>
<div style="left:508px;top:106px;width:1px;height:44px;background:#8c8c8c;"></div>
<div style="left:509px;top:107px;width:1px;height:43px;background:#fff;"></div>
<div style="left:508px;top:150px;width:1px;height:98px;background:#b4b4b4;"></div>
<div style="left:599px;top:106px;width:1px;height:44px;background:#8c8c8c;"></div>
<div style="left:600px;top:107px;width:1px;height:43px;background:#fff;"></div>
<div style="left:599px;top:150px;width:1px;height:98px;background:#b4b4b4;"></div>
<div style="left:713px;top:106px;width:1px;height:44px;background:#8c8c8c;"></div>
<div style="left:714px;top:107px;width:1px;height:43px;background:#fff;"></div>
<div style="left:713px;top:150px;width:1px;height:98px;background:#b4b4b4;"></div>
<div style="left:955px;top:132px;width:1px;height:18px;background:#8c8c8c;"></div>
<div style="left:956px;top:133px;width:1px;height:17px;background:#fff;"></div>
<div style="left:955px;top:150px;width:1px;height:98px;background:#b4b4b4;"></div>
<div style="left:1122px;top:132px;width:1px;height:18px;background:#8c8c8c;"></div>
<div style="left:1123px;top:133px;width:1px;height:17px;background:#fff;"></div>
<div style="left:1122px;top:150px;width:1px;height:98px;background:#b4b4b4;"></div>
<div style="left:1234px;top:106px;width:1px;height:44px;background:#8c8c8c;"></div>
<div style="left:1235px;top:107px;width:1px;height:43px;background:#fff;"></div>
<div style="left:1234px;top:150px;width:1px;height:98px;background:#b4b4b4;"></div>
<div style="left:1401px;top:106px;width:1px;height:44px;background:#8c8c8c;"></div>
<div style="left:1402px;top:107px;width:1px;height:43px;background:#fff;"></div>
<div style="left:1401px;top:150px;width:1px;height:98px;background:#b4b4b4;"></div>
<div style="left:1568px;top:106px;width:1px;height:44px;background:#8c8c8c;"></div>
<div style="left:1569px;top:107px;width:1px;height:43px;background:#fff;"></div>
<div style="left:1568px;top:150px;width:1px;height:98px;background:#b4b4b4;"></div>
<div style="left:1729px;top:106px;width:1px;height:44px;background:#8c8c8c;"></div>
<div style="left:1729px;top:150px;width:1px;height:98px;background:#b4b4b4;"></div>
<div style="left:714px;top:132px;width:521px;height:1px;background:#8c8c8c;"></div>
<div style="left:7px;top:199px;width:12px;height:1px;background:#8c8c8c;"></div>
<div style="left:7px;top:248px;width:12px;height:1px;background:#8c8c8c;"></div>
<div style="left:7px;top:151px;width:1px;height:97px;background:#fff;"></div>
<div style="left:7px;top:151px;width:11px;height:1px;background:#fff;"></div>
<div style="left:7px;top:200px;width:11px;height:1px;background:#fff;"></div>
<span class="t" style="left:22px;top:121.5px;line-height:15px;transform:scaleX(0.9198);transform-origin:0 0;">Тип</span>
<span class="t" style="left:72px;top:121.5px;line-height:15px;transform:scaleX(0.8638);transform-origin:0 0;">№ п.п.</span>
<span class="t" style="left:172px;top:121.5px;line-height:15px;transform:scaleX(0.8815);transform-origin:0 0;">Наименование работ</span>
<span class="t" style="left:407px;top:121.5px;line-height:15px;transform:scaleX(0.8732);transform-origin:0 0;">Ед. изм.</span>
<span class="t" style="left:511px;top:121.5px;line-height:15px;transform:scaleX(0.8805);transform-origin:0 0;">Объем работ</span>
<span class="t" style="left:602px;top:109.5px;line-height:13px;transform:scaleX(0.9051);transform-origin:0 0;">Формула расчета</span>
<span class="t" style="left:602px;top:122.5px;line-height:13px;transform:scaleX(0.8849);transform-origin:0 0;">объемов работ и</span>
<span class="t" style="left:602px;top:135.5px;line-height:13px;transform:scaleX(0.8799);transform-origin:0 0;">расхода материалов</span>
<span class="t" style="left:716px;top:112.5px;line-height:15px;transform:scaleX(0.8841);transform-origin:0 0;">Ссылка на чертежи, спецификации в проектной документации</span>
<span class="t" style="left:716px;top:134.5px;line-height:15px;transform:scaleX(0.8770);transform-origin:0 0;">Описание</span>
<span class="t" style="left:958px;top:134.5px;line-height:15px;transform:scaleX(0.8708);transform-origin:0 0;">Наименование файла</span>
<span class="t" style="left:1125px;top:134.5px;line-height:15px;transform:scaleX(0.8853);transform-origin:0 0;">Номер страниц</span>
<span class="t" style="left:1238px;top:121.5px;line-height:15px;transform:scaleX(0.8833);transform-origin:0 0;">Дополнительная информация</span>
<span class="t" style="left:1404px;top:121.5px;line-height:15px;transform:scaleX(0.8969);transform-origin:0 0;">Комментарий</span>
<span class="t" style="left:1571px;top:121.5px;line-height:15px;transform:scaleX(0.9005);transform-origin:0 0;">Связь с ЛС</span>
<svg style="left:38px;top:169px" width="13" height="13" viewBox="0 0 16 16"><rect x="3.5" y="0.5" width="11" height="12" fill="#fff6b0" stroke="#9a9a9a" stroke-width="1"/><path d="M.5 3.5h7l3 3v8h-10z" fill="#a8f0c0" stroke="#8a8a8a" stroke-width="1" /><path d="M7.5 3.5v3h3" fill="none" stroke="#8a8a8a" stroke-width="0.9" /><path d="M2.5 9h6M2.5 11.5h6" fill="none" stroke="#7ab08a" stroke-width="1" /></svg>
<span class="t" style="left:72px;top:153.5px;line-height:15px;color:#1a1ae0;font-weight:700;transform:scaleX(1.0000);transform-origin:0 0;">ВОР.Р1</span>
<span class="t" style="left:172px;top:153px;line-height:16px;font-size:13px;color:#1a1ae0;font-weight:700;letter-spacing:0.327px;">Проект организации земельного</span>
<span class="t" style="left:172px;top:169px;line-height:16px;font-size:13px;color:#1a1ae0;font-weight:700;letter-spacing:0.609px;">участка</span>
<svg style="left:9px;top:217px" width="6" height="13" viewBox="0 0 6 13"><path d="M0 0l6 6.5-6 6.5z" fill="#000"/></svg>
<svg style="left:36px;top:216px" width="16" height="16" viewBox="0 0 16 16"><path d="M9 1.2Q15.6 5 13.6 10.4Q10.5 14.6 5 12.4" fill="none" stroke="#9aaab0" stroke-width="1.5" /><path d="M1.4 13.6L4.9 10.7" fill="none" stroke="#e08a20" stroke-width="2.1" /><path d="M1 14l1.2-1" fill="none" stroke="#7a4a10" stroke-width="2" /><path d="M5.6 4.6L14.2 13.2" fill="none" stroke="#e08a20" stroke-width="1.9" /><path d="M13.3 12.3l1.2 1.2" fill="none" stroke="#9a5a10" stroke-width="1.9" /><path d="M3 5.7L6.6 2.1" fill="none" stroke="#4a5a60" stroke-width="2.8" /></svg>
<span class="t" style="left:72px;top:200.5px;line-height:15px;transform:scaleX(0.8850);transform-origin:0 0;">1</span>
<span class="t" style="left:172px;top:200.5px;line-height:15px;color:#f4f4f4;transform:scaleX(0.9078);transform-origin:0 0;">Устройство насыпи грунта</span>
<span class="t" style="left:407px;top:200.5px;line-height:15px;transform:scaleX(0.9078);transform-origin:0 0;">м3</span>
<span class="t" style="left:511px;top:200.5px;line-height:15px;transform:scaleX(0.8703);transform-origin:0 0;">1207</span>
<span class="t" style="left:602px;top:200.5px;line-height:15px;transform:scaleX(0.8586);transform-origin:0 0;">150*4*2+7</span>
<div style="left:3px;top:1068px;width:150px;height:22px;background:#f0f0f0;box-shadow:inset -1px -1px 0 #696969,inset -2px -2px 0 #a0a0a0,inset 1px 0 0 #fff;"></div>
<span class="t" style="left:10px;top:1073px;line-height:15px;transform:scaleX(0.8888);transform-origin:0 0;">Ведомость объемов работ</span>
<div style="left:153px;top:1070px;width:86px;height:18px;background:#f0f0f0;box-shadow:inset -1px -1px 0 #696969,inset -2px -2px 0 #a0a0a0,inset 1px 0 0 #fff;border-radius:0 0 3px 3px;"></div>
<span class="t" style="left:158px;top:1071.5px;line-height:15px;transform:scaleX(0.8924);transform-origin:0 0;">Предпросмотр</span>
<div style="left:2px;top:1091px;width:1751px;height:1px;background:#b8b8b8;"></div>
<div style="left:2px;top:1092px;width:1751px;height:1px;background:#fff;"></div>
<div style="left:4px;top:1094px;width:85px;height:26px;background:#f0f0f0;box-shadow:inset 1px 1px 0 #a0a0a0,inset -1px -1px 0 #fff;"></div>
<div style="left:93px;top:1094px;width:295px;height:26px;background:#f0f0f0;box-shadow:inset 1px 1px 0 #a0a0a0,inset -1px -1px 0 #fff;"></div>
<div style="left:392px;top:1094px;width:1292px;height:26px;background:#f0f0f0;box-shadow:inset 1px 1px 0 #a0a0a0,inset -1px -1px 0 #fff;"></div>
<div style="left:1687px;top:1094px;width:29px;height:26px;background:#f0f0f0;box-shadow:inset 1px 1px 0 #a0a0a0,inset -1px -1px 0 #fff;"></div>
<div style="left:1720px;top:1094px;width:32px;height:26px;background:#f0f0f0;box-shadow:inset 1px 1px 0 #a0a0a0,inset -1px -1px 0 #fff;"></div>
<div style="left:90px;top:1093px;width:1px;height:27px;background:#a0a0a0;"></div>
<div style="left:91px;top:1093px;width:1px;height:27px;background:#fff;"></div>
<div style="left:389px;top:1093px;width:1px;height:27px;background:#a0a0a0;"></div>
<div style="left:390px;top:1093px;width:1px;height:27px;background:#fff;"></div>
<div style="left:1685px;top:1093px;width:1px;height:27px;background:#a0a0a0;"></div>
<div style="left:1686px;top:1093px;width:1px;height:27px;background:#fff;"></div>
<div style="left:1717px;top:1093px;width:1px;height:27px;background:#a0a0a0;"></div>
<div style="left:1718px;top:1093px;width:1px;height:27px;background:#fff;"></div>
<svg style="left:1691px;top:1097px" width="18" height="18" viewBox="0 0 16 16"><rect x="2" y="2.5" width="14" height="13" fill="#a8a8a8" rx="4"/><rect x="8" y="5.5" width="2" height="2" fill="#e0e0e0"/><rect x="8" y="8.5" width="2" height="5" fill="#e0e0e0"/><path d="M2 2l14 13" fill="none" stroke="#f01020" stroke-width="1.8" /></svg>
<span class="t" style="left:1727px;top:1099px;line-height:16px;font-size:12px;letter-spacing:-1.200px;">RU</span>
<div style="left:0px;top:1120px;width:1754px;height:1px;background:#8a8a8a;"></div>
<div style="left:378px;top:377px;width:714px;height:502px;background:#f0f0f0;border:1px solid #6e6e6e;box-sizing:border-box;"></div>
<div style="left:379px;top:378px;width:712px;height:31px;background:#fff;"></div>
<div style="left:379px;top:409px;width:2px;height:403px;background:#fff;"></div>
<div style="left:379px;top:814px;width:1px;height:64px;background:#fff;"></div>
<span class="t" style="left:408px;top:385px;line-height:16px;font-size:12px;letter-spacing:-0.676px;">Буфер</span>
<div style="left:972px;top:392px;width:10px;height:1px;background:#000;"></div>
<div style="left:1017px;top:387px;width:10px;height:10px;border:1px solid #000;box-sizing:border-box;"></div>
<svg style="left:1063px;top:387px" width="10" height="10" viewBox="0 0 10 10"><path d="M0 0l10 10M10 0l-10 10" stroke="#000" stroke-width="1.1"/></svg>
<div style="left:383px;top:411px;width:1px;height:20px;background:#fff;"></div>
<div style="left:384px;top:411px;width:1px;height:20px;background:#a0a0a0;"></div>
<div style="left:383px;top:433px;width:308px;height:1px;background:#a0a0a0;"></div>
<div style="left:690px;top:409px;width:1px;height:25px;background:#a0a0a0;"></div>
<svg style="left:390px;top:413px" width="16" height="16" viewBox="0 0 16 16"><path d="M1.5 1.5h11l2 2v11h-13z" fill="#3a3a3a" stroke="#222" stroke-width="1" /><rect x="4" y="2" width="7" height="5" fill="#e8eef5"/><rect x="8.5" y="2.5" width="1.8" height="3.5" fill="#3a3a3a"/><rect x="3.5" y="9.5" width="9" height="5" fill="#d7f1f3" stroke="#8aa" stroke-width="0.6"/></svg>
<svg style="left:413px;top:412px" width="16" height="16" viewBox="0 0 16 16"><path d="M3.5 8.5C5 4.5 11 4 13.2 10" fill="none" stroke="#1565d8" stroke-width="1.9" /><path d="M1.2 5.2l.8 5 4.4-2z" fill="#1565d8" /></svg>
<div style="left:435px;top:410px;width:1px;height:22px;background:#a0a0a0;"></div>
<div style="left:436px;top:410px;width:1px;height:22px;background:#fff;"></div>
<svg style="left:442px;top:413px" width="16" height="16" viewBox="0 0 16 16"><path d="M3 3l10 10M13 3l-10 10" fill="none" stroke="#f0382a" stroke-width="1.7" /></svg>
<span class="t" style="left:462px;top:413px;line-height:16px;font-size:12px;letter-spacing:-0.117px;">Удалить выделенные строки</span>
<span class="t" style="left:631px;top:413px;line-height:16px;font-size:12px;letter-spacing:-0.036px;">Очистить</span>
<span class="t" style="left:387px;top:438.5px;line-height:15px;transform:scaleX(0.8946);transform-origin:0 0;">Нормативы</span>
<div style="left:450px;top:436px;width:1px;height:17px;background:#a0a0a0;"></div>
<div style="left:451px;top:436px;width:1px;height:17px;background:#808080;"></div>
<div style="left:452px;top:436px;width:1px;height:17px;background:#fff;"></div>
<span class="t" style="left:458px;top:438.5px;line-height:15px;transform:scaleX(0.9167);transform-origin:0 0;">Результаты поиска</span>
<span class="t" style="left:569px;top:438.5px;line-height:15px;transform:scaleX(0.9125);transform-origin:0 0;">М29</span>
<div style="left:382px;top:432px;width:182px;height:24px;border:3px solid #ff0000;box-sizing:border-box;"></div>
<div style="left:603px;top:434px;width:48px;height:20px;background:#f0f0f0;box-shadow:inset 1px 1px 0 #fff,inset -1px 0 0 #696969;"></div>
<span class="t" style="left:611px;top:436.5px;line-height:15px;transform:scaleX(0.8797);transform-origin:0 0;">Смета</span>
<span class="t" style="left:655px;top:439px;line-height:15px;transform:scaleX(0.8898);transform-origin:0 0;">Ресурсный расчет</span>
<div style="left:752px;top:438px;width:1px;height:17px;background:#696969;"></div>
<div style="left:751px;top:438px;width:1px;height:17px;background:#a0a0a0;"></div>
<div style="left:654px;top:437px;width:98px;height:1px;background:#fff;"></div>
<div style="left:601px;top:432px;width:52px;height:23px;border:3px solid #ff0000;box-sizing:border-box;"></div>
<svg style="left:386px;top:461px" width="16" height="16" viewBox="0 0 16 16"><defs><linearGradient id="gfn" x1="0" y1="0" x2="1" y2="1"><stop offset="0" stop-color="#fff200"/><stop offset=".55" stop-color="#ffe600"/><stop offset="1" stop-color="#ffb000"/></linearGradient></defs><path d="M.6 1.6h6.4l.9 1.4h7.5v11.6H.6z" fill="url(#gfn)" stroke="#3a3a30" stroke-width="1.1" /><path d="M1.5 2.6h5" fill="none" stroke="#c89a00" stroke-width="0.9" /><path d="M12 -.5v8M8 3.5h8M9.2 .7l5.6 5.6M14.8 .7l-5.6 5.6" fill="none" stroke="#ffb020" stroke-width="0.9" /><path d="M12 1.2v4.6M9.7 3.5h4.6" fill="none" stroke="#fff8d0" stroke-width="0.9" /><circle cx="12" cy="3.5" r="0.9" fill="#f02000"/></svg>
<svg style="left:409px;top:461px" width="16" height="16" viewBox="0 0 16 16"><rect x="1.5" y="4.5" width="8" height="10" fill="#ececec" stroke="#a8a8a8" stroke-width="0.9"/><rect x="5.5" y="2.5" width="8" height="10" fill="#f4f4f4" stroke="#a8a8a8" stroke-width="0.9"/><path d="M9 0l4 0 0 4" fill="none" stroke="#9a9a9a" stroke-width="1.4" /><path d="M8 5l5-5" fill="none" stroke="#9a9a9a" stroke-width="1.2" /></svg>
<svg style="left:432px;top:461px" width="16" height="16" viewBox="0 0 16 16"><defs><linearGradient id="gpl" x1="0" y1="1" x2="1" y2="0"><stop offset="0" stop-color="#4a8ed0"/><stop offset="1" stop-color="#2cd060"/></linearGradient></defs><path d="M6.6 2.6h3v4h4v3h-4v4.2h-3v-4.2h-4.2v-3h4.2z" fill="url(#gpl)" stroke="#8aa0b0" stroke-width="0.5" /></svg>
<svg style="left:455px;top:461px" width="16" height="16" viewBox="0 0 16 16"><path d="M3 2.5l11 11" fill="none" stroke="#9a9a9a" stroke-width="1.2" /><path d="M14 2.5l-11 11" fill="none" stroke="#8e8e8e" stroke-width="2.1" /></svg>
<div style="left:477px;top:458px;width:1px;height:21px;background:#a0a0a0;"></div>
<div style="left:478px;top:458px;width:1px;height:21px;background:#fff;"></div>
<svg style="left:484px;top:461px" width="16" height="16" viewBox="0 0 16 16"><rect x="1.5" y="3.5" width="11" height="11.5" fill="#2a9a7a" stroke="#1a6a5a" stroke-width="0.8"/><rect x="3" y="5.5" width="8" height="8.5" fill="#f4f4f4"/><rect x="4.5" y="2" width="5" height="2.5" fill="#888" stroke="#555" stroke-width="0.6"/><path d="M4.5 8h5M4.5 10h4M4.5 12h5" fill="none" stroke="#666" stroke-width="0.8" /><path d="M8 10.5L14.5 2.5" fill="none" stroke="#f2b01a" stroke-width="2.4" /><path d="M8 10.5l-.8 1.8 1.9-.8z" fill="#333" /></svg>
<svg style="left:506px;top:461px" width="16" height="16" viewBox="0 0 16 16"><path d="M3 4l4-1.5 4 4.5-2 2.5-5.5-1z" fill="#a0a0a0" stroke="#8a8a8a" stroke-width="0.6" /><path d="M9 9l5 5" fill="none" stroke="#9a9a9a" stroke-width="1.8" /><path d="M1.5 6.5l3 1" fill="none" stroke="#b0b0b0" stroke-width="1" /></svg>
<div style="left:383px;top:480px;width:214px;height:17px;background:#9cb4d4;"></div>
<span class="t" style="left:428px;top:480px;line-height:14px;font-size:11.5px;font-weight:700;transform:scaleX(1.0197);transform-origin:0 0;">Сметные фрагменты</span>
<div style="left:383px;top:497px;width:214px;height:312px;background:#fff;box-shadow:inset 2px 2px 0 #696969,inset -1px -1px 0 #fff,inset -2px -2px 0 #e4e4e4;"></div>
<div style="left:385px;top:499px;width:211px;height:16px;background:#bcd0ea;"></div>
<span class="t" style="left:396px;top:499px;line-height:16px;font-size:12.5px;font-weight:700;transform:scaleX(1.1593);transform-origin:0 0;">Личные [Администратор]</span>
<div style="left:417px;top:515px;width:179px;height:16px;background:#0078d7;"></div>
<span class="t" style="left:420px;top:516px;line-height:14px;font-size:11.5px;color:#fff;font-weight:700;transform:scaleX(1.0132);transform-origin:0 0;">1 [по умолчанию]</span>
<span class="t" style="left:419px;top:532px;line-height:14px;font-size:12px;">2</span>
<div style="left:385px;top:547px;width:211px;height:16px;background:#bcd0ea;"></div>
<span class="t" style="left:396px;top:547px;line-height:16px;font-size:12.5px;font-weight:700;transform:scaleX(1.0788);transform-origin:0 0;">Общие</span>
<div style="left:392px;top:515px;width:0;height:32px;border-left:1px dotted #808080"></div>
<div style="left:393px;top:523px;width:8px;height:0;border-top:1px dotted #808080"></div>
<div style="left:393px;top:539px;width:8px;height:0;border-top:1px dotted #808080"></div>
<svg style="left:401px;top:515px" width="16" height="16" viewBox="0 0 16 16"><rect x="3.5" y="1.5" width="9" height="8.5" fill="#56f000" stroke="#8c8c8c" stroke-width="1"/><path d="M5 3.6h6.5M5 5.6h6.5M5 7.6h6.5" fill="none" stroke="#2a78f0" stroke-width="1.2" stroke-dasharray="1.2 1.4"/><path d="M6.3 3.6h6M6.3 5.6h6M6.3 7.6h6" fill="none" stroke="#e8fff0" stroke-width="1" stroke-dasharray=".8 1.8"/><rect x="1.5" y="5.5" width="3.2" height="10" fill="#f8f078" stroke="#8c8c8c" stroke-width="1"/><path d="M3 7v7.5" fill="none" stroke="#fffff0" stroke-width="0.8" /><rect x="4.7" y="9.5" width="2.5" height="6" fill="#fff" stroke="#8c8c8c" stroke-width="0.8"/><path d="M6 10.5v4.5" fill="none" stroke="#2a78f0" stroke-width="1" stroke-dasharray="1 .8"/><rect x="7.2" y="9.5" width="7.3" height="6" fill="#c4f07c" stroke="#8c8c8c" stroke-width="1"/><path d="M8.8 11.6h5M8.8 13.6h5" fill="none" stroke="#2a78f0" stroke-width="1.2" stroke-dasharray="1.2 1.2"/></svg>
<svg style="left:401px;top:531px" width="16" height="16" viewBox="0 0 16 16"><rect x="3.5" y="1.5" width="9" height="8.5" fill="#56f000" stroke="#8c8c8c" stroke-width="1"/><path d="M5 3.6h6.5M5 5.6h6.5M5 7.6h6.5" fill="none" stroke="#2a78f0" stroke-width="1.2" stroke-dasharray="1.2 1.4"/><path d="M6.3 3.6h6M6.3 5.6h6M6.3 7.6h6" fill="none" stroke="#e8fff0" stroke-width="1" stroke-dasharray=".8 1.8"/><rect x="1.5" y="5.5" width="3.2" height="10" fill="#f8f078" stroke="#8c8c8c" stroke-width="1"/><path d="M3 7v7.5" fill="none" stroke="#fffff0" stroke-width="0.8" /><rect x="4.7" y="9.5" width="2.5" height="6" fill="#fff" stroke="#8c8c8c" stroke-width="0.8"/><path d="M6 10.5v4.5" fill="none" stroke="#2a78f0" stroke-width="1" stroke-dasharray="1 .8"/><rect x="7.2" y="9.5" width="7.3" height="6" fill="#c4f07c" stroke="#8c8c8c" stroke-width="1"/><path d="M8.8 11.6h5M8.8 13.6h5" fill="none" stroke="#2a78f0" stroke-width="1.2" stroke-dasharray="1.2 1.2"/></svg>
<div style="left:597px;top:458px;width:1px;height:353px;background:#8c8c8c;"></div>
<div style="left:598px;top:455px;width:3px;height:357px;background:#fff;"></div>
<div style="left:564px;top:454px;width:37px;height:1px;background:#fff;"></div>
<div style="left:653px;top:454px;width:436px;height:1px;background:#fff;"></div>
<div style="left:1089px;top:455px;width:2px;height:359px;background:#696969;"></div>
<div style="left:1087px;top:455px;width:2px;height:357px;background:#fafafa;"></div>
<div style="left:601px;top:810px;width:488px;height:2px;background:#fafafa;"></div>
<div style="left:379px;top:812px;width:712px;height:2px;background:#696969;"></div>
<div style="left:601px;top:461px;width:1px;height:347px;background:#e8e8e8;"></div>
<div style="left:601px;top:460px;width:484px;height:1px;background:#fff;"></div>
<div style="left:602px;top:461px;width:483px;height:1px;background:#e6e6e6;"></div>
<div style="left:1085px;top:461px;width:2px;height:349px;background:#696969;"></div>
<div style="left:600px;top:808px;width:487px;height:2px;background:#696969;"></div>
<div style="left:1082px;top:465px;width:2px;height:341px;background:#fff;"></div>
<div style="left:1084px;top:462px;width:1px;height:346px;background:#e8e8e8;"></div>
<div style="left:602px;top:805px;width:482px;height:2px;background:#fff;"></div>
<div style="left:602px;top:807px;width:483px;height:1px;background:#e8e8e8;"></div>
<div style="left:604px;top:464px;width:461px;height:325px;background:#fff;"></div>
<div style="left:604px;top:464px;width:461px;height:50px;background:#f0f0f0;"></div>
<div style="left:617px;top:514px;width:448px;height:29px;background:#e4e4e4;"></div>
<div style="left:604px;top:514px;width:13px;height:29px;background:#f0f0f0;"></div>
<div style="left:617px;top:544px;width:448px;height:29px;background:#f4e6e6;"></div>
<div style="left:604px;top:544px;width:13px;height:29px;background:#f0f0f0;"></div>
<div style="left:617px;top:574px;width:448px;height:29px;background:#e4e4e4;"></div>
<div style="left:604px;top:574px;width:13px;height:29px;background:#f0f0f0;"></div>
<div style="left:617px;top:604px;width:448px;height:29px;background:#f4e6e6;"></div>
<div style="left:604px;top:604px;width:13px;height:29px;background:#f0f0f0;"></div>
<div style="left:617px;top:634px;width:448px;height:29px;background:#f4e6e6;"></div>
<div style="left:604px;top:634px;width:13px;height:29px;background:#f0f0f0;"></div>
<div style="left:617px;top:664px;width:448px;height:29px;background:#e4e4e4;"></div>
<div style="left:604px;top:664px;width:13px;height:29px;background:#f0f0f0;"></div>
<div style="left:617px;top:514px;width:17px;height:29px;background:#a0a0a0;"></div>
<div style="left:605px;top:465px;width:460px;height:1px;background:#fff;"></div>
<div style="left:1031px;top:483px;width:34px;height:1px;background:#fff;"></div>
<div style="left:604px;top:464px;width:1px;height:50px;background:#8c8c8c;"></div>
<div style="left:605px;top:465px;width:1px;height:48px;background:#fff;"></div>
<div style="left:604px;top:514px;width:1px;height:180px;background:#8c8c8c;"></div>
<div style="left:616px;top:464px;width:1px;height:50px;background:#8c8c8c;"></div>
<div style="left:617px;top:465px;width:1px;height:48px;background:#fff;"></div>
<div style="left:616px;top:514px;width:1px;height:180px;background:#8c8c8c;"></div>
<div style="left:634px;top:464px;width:1px;height:50px;background:#8c8c8c;"></div>
<div style="left:635px;top:465px;width:1px;height:48px;background:#fff;"></div>
<div style="left:634px;top:514px;width:1px;height:180px;background:#b4b4b4;"></div>
<div style="left:672px;top:464px;width:1px;height:50px;background:#8c8c8c;"></div>
<div style="left:673px;top:465px;width:1px;height:48px;background:#fff;"></div>
<div style="left:672px;top:514px;width:1px;height:180px;background:#b4b4b4;"></div>
<div style="left:903px;top:464px;width:1px;height:50px;background:#8c8c8c;"></div>
<div style="left:904px;top:465px;width:1px;height:48px;background:#fff;"></div>
<div style="left:903px;top:514px;width:1px;height:180px;background:#b4b4b4;"></div>
<div style="left:979px;top:464px;width:1px;height:50px;background:#8c8c8c;"></div>
<div style="left:980px;top:465px;width:1px;height:48px;background:#fff;"></div>
<div style="left:979px;top:514px;width:1px;height:180px;background:#b4b4b4;"></div>
<div style="left:1030px;top:464px;width:1px;height:50px;background:#8c8c8c;"></div>
<div style="left:1031px;top:465px;width:1px;height:48px;background:#fff;"></div>
<div style="left:1030px;top:514px;width:1px;height:180px;background:#b4b4b4;"></div>
<div style="left:605px;top:514px;width:1px;height:180px;background:#fff;"></div>
<div style="left:604px;top:464px;width:461px;height:1px;background:#8c8c8c;"></div>
<div style="left:604px;top:513px;width:461px;height:1px;background:#8c8c8c;"></div>
<div style="left:1031px;top:482px;width:34px;height:1px;background:#8c8c8c;"></div>
<div style="left:604px;top:543px;width:461px;height:1px;background:#b4b4b4;"></div>
<div style="left:604px;top:543px;width:13px;height:1px;background:#8c8c8c;"></div>
<div style="left:605px;top:544px;width:11px;height:1px;background:#fff;"></div>
<div style="left:604px;top:573px;width:461px;height:1px;background:#b4b4b4;"></div>
<div style="left:604px;top:573px;width:13px;height:1px;background:#8c8c8c;"></div>
<div style="left:605px;top:574px;width:11px;height:1px;background:#fff;"></div>
<div style="left:604px;top:603px;width:461px;height:1px;background:#b4b4b4;"></div>
<div style="left:604px;top:603px;width:13px;height:1px;background:#8c8c8c;"></div>
<div style="left:605px;top:604px;width:11px;height:1px;background:#fff;"></div>
<div style="left:604px;top:633px;width:461px;height:1px;background:#b4b4b4;"></div>
<div style="left:604px;top:633px;width:13px;height:1px;background:#8c8c8c;"></div>
<div style="left:605px;top:634px;width:11px;height:1px;background:#fff;"></div>
<div style="left:604px;top:663px;width:461px;height:1px;background:#b4b4b4;"></div>
<div style="left:604px;top:663px;width:13px;height:1px;background:#8c8c8c;"></div>
<div style="left:605px;top:664px;width:11px;height:1px;background:#fff;"></div>
<div style="left:604px;top:693px;width:461px;height:1px;background:#b4b4b4;"></div>
<div style="left:604px;top:693px;width:13px;height:1px;background:#8c8c8c;"></div>
<div style="left:605px;top:694px;width:11px;height:1px;background:#fff;"></div>
<span class="t" style="left:620px;top:482.5px;line-height:15px;transform:scaleX(0.9317);transform-origin:0 0;">Ти</span>
<span class="t" style="left:637px;top:482.5px;line-height:15px;transform:scaleX(0.9617);transform-origin:0 0;">№п/п</span>
<span class="t" style="left:675px;top:482.5px;line-height:15px;transform:scaleX(0.8847);transform-origin:0 0;">Наименование</span>
<span class="t" style="left:906px;top:482.5px;line-height:15px;transform:scaleX(0.8769);transform-origin:0 0;">Обоснование</span>
<span class="t" style="left:982px;top:476.5px;line-height:13px;transform:scaleX(0.8732);transform-origin:0 0;">Ед.изм.</span>
<span class="t" style="left:982px;top:489.5px;line-height:13px;transform:scaleX(0.9587);transform-origin:0 0;">(краткая)</span>
<div style="left:1030px;top:483px;width:1px;height:30px;background:#8c8c8c;"></div>
<div style="left:1031px;top:484px;width:1px;height:29px;background:#fff;"></div>
<div style="left:1032px;top:484px;width:2px;height:29px;background:#f0f0f0;"></div>
<span class="t" style="left:1033px;top:467.5px;line-height:13px;transform:scaleX(0.8626);transform-origin:0 0;">Количес</span>
<span class="t" style="left:1033px;top:485.5px;line-height:13px;transform:scaleX(0.9231);transform-origin:0 0;">Всего</span>
<span class="t" style="left:1033px;top:498.5px;line-height:13px;transform:scaleX(0.8636);transform-origin:0 0;">коэф.</span>
<svg style="left:608px;top:523px" width="6" height="11" viewBox="0 0 6 11"><path d="M0 0l6 5.5-6 5.5z" fill="#000"/></svg>
<span class="t" style="left:637px;top:515.5px;line-height:13px;transform:scaleX(0.8850);transform-origin:0 0;">1</span>
<span class="t" style="left:675px;top:515.5px;line-height:13px;transform:scaleX(0.8950);transform-origin:0 0;">ПОГРУЖЕНИЕ ДИЗЕЛЬ-МОЛОТОМ НА</span>
<span class="t" style="left:675px;top:528.5px;line-height:13px;transform:scaleX(0.8828);transform-origin:0 0;">ЭКСКАВАТОРЕ ЖЕЛЕЗОБЕТОННЫХ СВАЙ</span>
<span class="t" style="left:906px;top:515.5px;line-height:13px;transform:scaleX(0.7895);transform-origin:0 0;">3.5-1-1</span>
<span class="t" style="left:982px;top:515.5px;line-height:13px;transform:scaleX(0.9078);transform-origin:0 0;">м3</span>
<span class="t" style="left:1033px;top:515.5px;line-height:13px;transform:scaleX(0.8850);transform-origin:0 0;">5</span>
<svg style="left:617px;top:550px" width="16" height="16" viewBox="0 0 16 16"><rect x="6.1" y="5" width="3.7" height="2.2" fill="#f67a14" stroke="#c94e00" stroke-width="0.5" rx="0.9"/><path d="M6.8999999999999995 5.7h2" fill="none" stroke="#ffb060" stroke-width="0.6" /><rect x="2.3" y="7.3" width="3.7" height="2.2" fill="#f67a14" stroke="#c94e00" stroke-width="0.5" rx="0.9"/><path d="M3.0999999999999996 8.0h2" fill="none" stroke="#ffb060" stroke-width="0.6" /><rect x="6.1" y="7.3" width="3.7" height="2.2" fill="#f67a14" stroke="#c94e00" stroke-width="0.5" rx="0.9"/><path d="M6.8999999999999995 8.0h2" fill="none" stroke="#ffb060" stroke-width="0.6" /><rect x="9.9" y="7.3" width="3.7" height="2.2" fill="#f67a14" stroke="#c94e00" stroke-width="0.5" rx="0.9"/><path d="M10.700000000000001 8.0h2" fill="none" stroke="#ffb060" stroke-width="0.6" /><rect x="0.2" y="9.6" width="3.7" height="2.2" fill="#f67a14" stroke="#c94e00" stroke-width="0.5" rx="0.9"/><path d="M1.0 10.299999999999999h2" fill="none" stroke="#ffb060" stroke-width="0.6" /><rect x="4.1" y="9.6" width="3.7" height="2.2" fill="#f67a14" stroke="#c94e00" stroke-width="0.5" rx="0.9"/><path d="M4.8999999999999995 10.299999999999999h2" fill="none" stroke="#ffb060" stroke-width="0.6" /><rect x="8" y="9.6" width="3.7" height="2.2" fill="#f67a14" stroke="#c94e00" stroke-width="0.5" rx="0.9"/><path d="M8.8 10.299999999999999h2" fill="none" stroke="#ffb060" stroke-width="0.6" /><rect x="11.9" y="9.6" width="3.7" height="2.2" fill="#f67a14" stroke="#c94e00" stroke-width="0.5" rx="0.9"/><path d="M12.700000000000001 10.299999999999999h2" fill="none" stroke="#ffb060" stroke-width="0.6" /></svg>
<span class="t" style="left:637px;top:545.5px;line-height:13px;transform:scaleX(0.8850);transform-origin:0 0;">1,1</span>
<span class="t" style="left:675px;top:545.5px;line-height:13px;transform:scaleX(0.8783);transform-origin:0 0;">СВАИ ЖЕЛЕЗОБЕТОННЫЕ, МАРКА С</span>
<span class="t" style="left:906px;top:545.5px;line-height:13px;transform:scaleX(0.8483);transform-origin:0 0;">1.5-1-179</span>
<span class="t" style="left:982px;top:545.5px;line-height:13px;transform:scaleX(0.9078);transform-origin:0 0;">м3</span>
<span class="t" style="left:1033px;top:545.5px;line-height:13px;transform:scaleX(0.9119);transform-origin:0 0;">5,05</span>
<svg style="left:618px;top:580.5px" width="16" height="16" viewBox="0 0 16 16"><rect x="2.5" y="0.5" width="9.5" height="14.5" fill="#ecdcc0" stroke="#8a6a5a" stroke-width="1" rx="1"/><rect x="3.5" y="1.5" width="7.5" height="3.2" fill="#1f8a7a"/><path d="M4.3 2.6h5.5" fill="none" stroke="#8fe0d0" stroke-width="0.8" /><path d="M4.2 6.5h6.5M4.2 8.6h6.5M4.2 10.7h6.5M4.2 12.8h6.5" fill="none" stroke="#fffaf0" stroke-width="1.3" stroke-dasharray="1.5 .8"/></svg>
<span class="t" style="left:637px;top:575.5px;line-height:13px;transform:scaleX(0.8850);transform-origin:0 0;">2</span>
<span class="t" style="left:675px;top:575.5px;line-height:13px;transform:scaleX(0.9043);transform-origin:0 0;">Укрупнительная сборка и установка</span>
<span class="t" style="left:675px;top:588.5px;line-height:13px;transform:scaleX(0.8992);transform-origin:0 0;">конструкций арок и ферм сегментных с</span>
<span class="t" style="left:906px;top:575.5px;line-height:13px;transform:scaleX(0.8333);transform-origin:0 0;">10-01-001-01</span>
<span class="t" style="left:982px;top:575.5px;line-height:13px;transform:scaleX(0.7921);transform-origin:0 0;">ШТ</span>
<span class="t" style="left:1033px;top:575.5px;line-height:13px;transform:scaleX(0.8698);transform-origin:0 0;">15</span>
<svg style="left:617px;top:610px" width="16" height="16" viewBox="0 0 16 16"><rect x="6.1" y="5" width="3.7" height="2.2" fill="#f67a14" stroke="#c94e00" stroke-width="0.5" rx="0.9"/><path d="M6.8999999999999995 5.7h2" fill="none" stroke="#ffb060" stroke-width="0.6" /><rect x="2.3" y="7.3" width="3.7" height="2.2" fill="#f67a14" stroke="#c94e00" stroke-width="0.5" rx="0.9"/><path d="M3.0999999999999996 8.0h2" fill="none" stroke="#ffb060" stroke-width="0.6" /><rect x="6.1" y="7.3" width="3.7" height="2.2" fill="#f67a14" stroke="#c94e00" stroke-width="0.5" rx="0.9"/><path d="M6.8999999999999995 8.0h2" fill="none" stroke="#ffb060" stroke-width="0.6" /><rect x="9.9" y="7.3" width="3.7" height="2.2" fill="#f67a14" stroke="#c94e00" stroke-width="0.5" rx="0.9"/><path d="M10.700000000000001 8.0h2" fill="none" stroke="#ffb060" stroke-width="0.6" /><rect x="0.2" y="9.6" width="3.7" height="2.2" fill="#f67a14" stroke="#c94e00" stroke-width="0.5" rx="0.9"/><path d="M1.0 10.299999999999999h2" fill="none" stroke="#ffb060" stroke-width="0.6" /><rect x="4.1" y="9.6" width="3.7" height="2.2" fill="#f67a14" stroke="#c94e00" stroke-width="0.5" rx="0.9"/><path d="M4.8999999999999995 10.299999999999999h2" fill="none" stroke="#ffb060" stroke-width="0.6" /><rect x="8" y="9.6" width="3.7" height="2.2" fill="#f67a14" stroke="#c94e00" stroke-width="0.5" rx="0.9"/><path d="M8.8 10.299999999999999h2" fill="none" stroke="#ffb060" stroke-width="0.6" /><rect x="11.9" y="9.6" width="3.7" height="2.2" fill="#f67a14" stroke="#c94e00" stroke-width="0.5" rx="0.9"/><path d="M12.700000000000001 10.299999999999999h2" fill="none" stroke="#ffb060" stroke-width="0.6" /></svg>
<span class="t" style="left:637px;top:605.5px;line-height:13px;transform:scaleX(0.8850);transform-origin:0 0;">2,1</span>
<span class="t" style="left:675px;top:605.5px;line-height:13px;transform:scaleX(0.8838);transform-origin:0 0;">Балки под установку направляющих</span>
<span class="t" style="left:675px;top:618.5px;line-height:13px;transform:scaleX(0.8837);transform-origin:0 0;">лифтов, обрамление проемов, конструкции</span>
<span class="t" style="left:906px;top:605.5px;line-height:13px;transform:scaleX(0.8516);transform-origin:0 0;">07.2.07.13-001</span>
<span class="t" style="left:982px;top:605.5px;line-height:13px;transform:scaleX(0.8850);transform-origin:0 0;">т</span>
<span class="t" style="left:1033px;top:605.5px;line-height:13px;transform:scaleX(0.8698);transform-origin:0 0;">12</span>
<svg style="left:617px;top:640px" width="16" height="16" viewBox="0 0 16 16"><rect x="6.1" y="5" width="3.7" height="2.2" fill="#f67a14" stroke="#c94e00" stroke-width="0.5" rx="0.9"/><path d="M6.8999999999999995 5.7h2" fill="none" stroke="#ffb060" stroke-width="0.6" /><rect x="2.3" y="7.3" width="3.7" height="2.2" fill="#f67a14" stroke="#c94e00" stroke-width="0.5" rx="0.9"/><path d="M3.0999999999999996 8.0h2" fill="none" stroke="#ffb060" stroke-width="0.6" /><rect x="6.1" y="7.3" width="3.7" height="2.2" fill="#f67a14" stroke="#c94e00" stroke-width="0.5" rx="0.9"/><path d="M6.8999999999999995 8.0h2" fill="none" stroke="#ffb060" stroke-width="0.6" /><rect x="9.9" y="7.3" width="3.7" height="2.2" fill="#f67a14" stroke="#c94e00" stroke-width="0.5" rx="0.9"/><path d="M10.700000000000001 8.0h2" fill="none" stroke="#ffb060" stroke-width="0.6" /><rect x="0.2" y="9.6" width="3.7" height="2.2" fill="#f67a14" stroke="#c94e00" stroke-width="0.5" rx="0.9"/><path d="M1.0 10.299999999999999h2" fill="none" stroke="#ffb060" stroke-width="0.6" /><rect x="4.1" y="9.6" width="3.7" height="2.2" fill="#f67a14" stroke="#c94e00" stroke-width="0.5" rx="0.9"/><path d="M4.8999999999999995 10.299999999999999h2" fill="none" stroke="#ffb060" stroke-width="0.6" /><rect x="8" y="9.6" width="3.7" height="2.2" fill="#f67a14" stroke="#c94e00" stroke-width="0.5" rx="0.9"/><path d="M8.8 10.299999999999999h2" fill="none" stroke="#ffb060" stroke-width="0.6" /><rect x="11.9" y="9.6" width="3.7" height="2.2" fill="#f67a14" stroke="#c94e00" stroke-width="0.5" rx="0.9"/><path d="M12.700000000000001 10.299999999999999h2" fill="none" stroke="#ffb060" stroke-width="0.6" /></svg>
<span class="t" style="left:637px;top:635.5px;line-height:13px;transform:scaleX(0.8850);transform-origin:0 0;">2,2</span>
<span class="t" style="left:675px;top:635.5px;line-height:13px;transform:scaleX(0.8791);transform-origin:0 0;">Балка клееная хвойных пород (ель, сосна),</span>
<span class="t" style="left:675px;top:648.5px;line-height:13px;transform:scaleX(0.8934);transform-origin:0 0;">размеры 100х100 мм</span>
<span class="t" style="left:906px;top:635.5px;line-height:13px;transform:scaleX(0.8611);transform-origin:0 0;">11.2.06.02-004</span>
<span class="t" style="left:982px;top:635.5px;line-height:13px;transform:scaleX(0.9078);transform-origin:0 0;">м3</span>
<span class="t" style="left:1033px;top:635.5px;line-height:13px;transform:scaleX(0.8850);transform-origin:0 0;">0</span>
<svg style="left:618px;top:670.5px" width="16" height="16" viewBox="0 0 16 16"><rect x="2.5" y="0.5" width="9.5" height="14.5" fill="#ecdcc0" stroke="#8a6a5a" stroke-width="1" rx="1"/><rect x="3.5" y="1.5" width="7.5" height="3.2" fill="#1f8a7a"/><path d="M4.3 2.6h5.5" fill="none" stroke="#8fe0d0" stroke-width="0.8" /><path d="M4.2 6.5h6.5M4.2 8.6h6.5M4.2 10.7h6.5M4.2 12.8h6.5" fill="none" stroke="#fffaf0" stroke-width="1.3" stroke-dasharray="1.5 .8"/></svg>
<span class="t" style="left:637px;top:665.5px;line-height:13px;transform:scaleX(0.8850);transform-origin:0 0;">3</span>
<span class="t" style="left:675px;top:665.5px;line-height:13px;transform:scaleX(0.8726);transform-origin:0 0;">Прокладка в траншеях труб чугунных</span>
<span class="t" style="left:675px;top:678.5px;line-height:13px;transform:scaleX(0.8814);transform-origin:0 0;">напорных раструбных диаметром: 65 мм</span>
<span class="t" style="left:906px;top:665.5px;line-height:13px;transform:scaleX(0.8333);transform-origin:0 0;">16-01-001-01</span>
<span class="t" style="left:982px;top:665.5px;line-height:13px;transform:scaleX(0.8885);transform-origin:0 0;">100 м</span>
<span class="t" style="left:1033px;top:665.5px;line-height:13px;transform:scaleX(0.9119);transform-origin:0 0;">0,03</span>
<div style="left:1065px;top:465px;width:17px;height:324px;background:#f0f0f0;"></div>
<div style="left:1065px;top:465px;width:1px;height:324px;background:#fff;"></div>
<div style="left:1065px;top:464px;width:17px;height:1px;background:#8c8c8c;"></div>
<div style="left:1066px;top:482px;width:16px;height:158px;background:#cdcdcd;"></div>
<svg style="left:1070px;top:472px" width="7" height="5" viewBox="0 0 7 5"><path d="M.6 4.2L3.5 1.3l2.9 2.9" fill="none" stroke="#505050" stroke-width="1.7"/></svg>
<svg style="left:1070px;top:777px" width="7" height="5" viewBox="0 0 7 5"><path d="M.6 .8L3.5 3.7 6.4 .8" fill="none" stroke="#505050" stroke-width="1.7"/></svg>
<div style="left:605px;top:789px;width:477px;height:16px;background:#f0f0f0;"></div>
<div style="left:622px;top:789px;width:17px;height:15px;background:#cdcdcd;"></div>
<svg style="left:611px;top:793px" width="5" height="7" viewBox="0 0 5 7"><path d="M4.2 .6L1.3 3.5l2.9 2.9" fill="none" stroke="#505050" stroke-width="1.7"/></svg>
<svg style="left:1053px;top:793px" width="5" height="7" viewBox="0 0 5 7"><path d="M.8 .6L3.7 3.5 .8 6.4" fill="none" stroke="#505050" stroke-width="1.7"/></svg>
<div style="left:1065px;top:793px;width:1px;height:3px;background:#606060;"></div>
<div style="left:385px;top:818px;width:13px;height:13px;background:#fff;box-shadow:inset 1px 1px 0 #808080,inset 2px 2px 0 #404040,inset -1px -1px 0 #fff,inset -2px -2px 0 #e3e3e3;"></div>
<svg style="left:388px;top:821px" width="7" height="7" viewBox="0 0 7 7"><path d="M.5 3l2 2.3L6.5 .8" fill="none" stroke="#000" stroke-width="1.6"/></svg>
<span class="t" style="left:402px;top:817.5px;line-height:15px;transform:scaleX(0.9067);transform-origin:0 0;">Закрывать после вставки</span>
<div style="left:387px;top:846px;width:615px;height:24px;background:#f0f0f0;box-shadow:inset 1px 1px 0 #696969,inset -1px -1px 0 #404040,inset -2px -2px 0 #696969,inset 2px 2px 0 #fff,inset -3px -3px 0 #a0a0a0;"></div>
<span class="t" style="left:594px;top:850.5px;line-height:15px;transform:scaleX(0.8868);transform-origin:0 0;">Вставить в "ВОР - Наименование ВОР"</span>
<div style="left:1010px;top:846px;width:73px;height:24px;background:#f0f0f0;box-shadow:inset 1px 1px 0 #fff,inset -1px -1px 0 #696969,inset -2px -2px 0 #a0a0a0;"></div>
<span class="t" style="left:1030px;top:850.5px;line-height:15px;transform:scaleX(0.8630);transform-origin:0 0;">Выход</span>
</body></html>
